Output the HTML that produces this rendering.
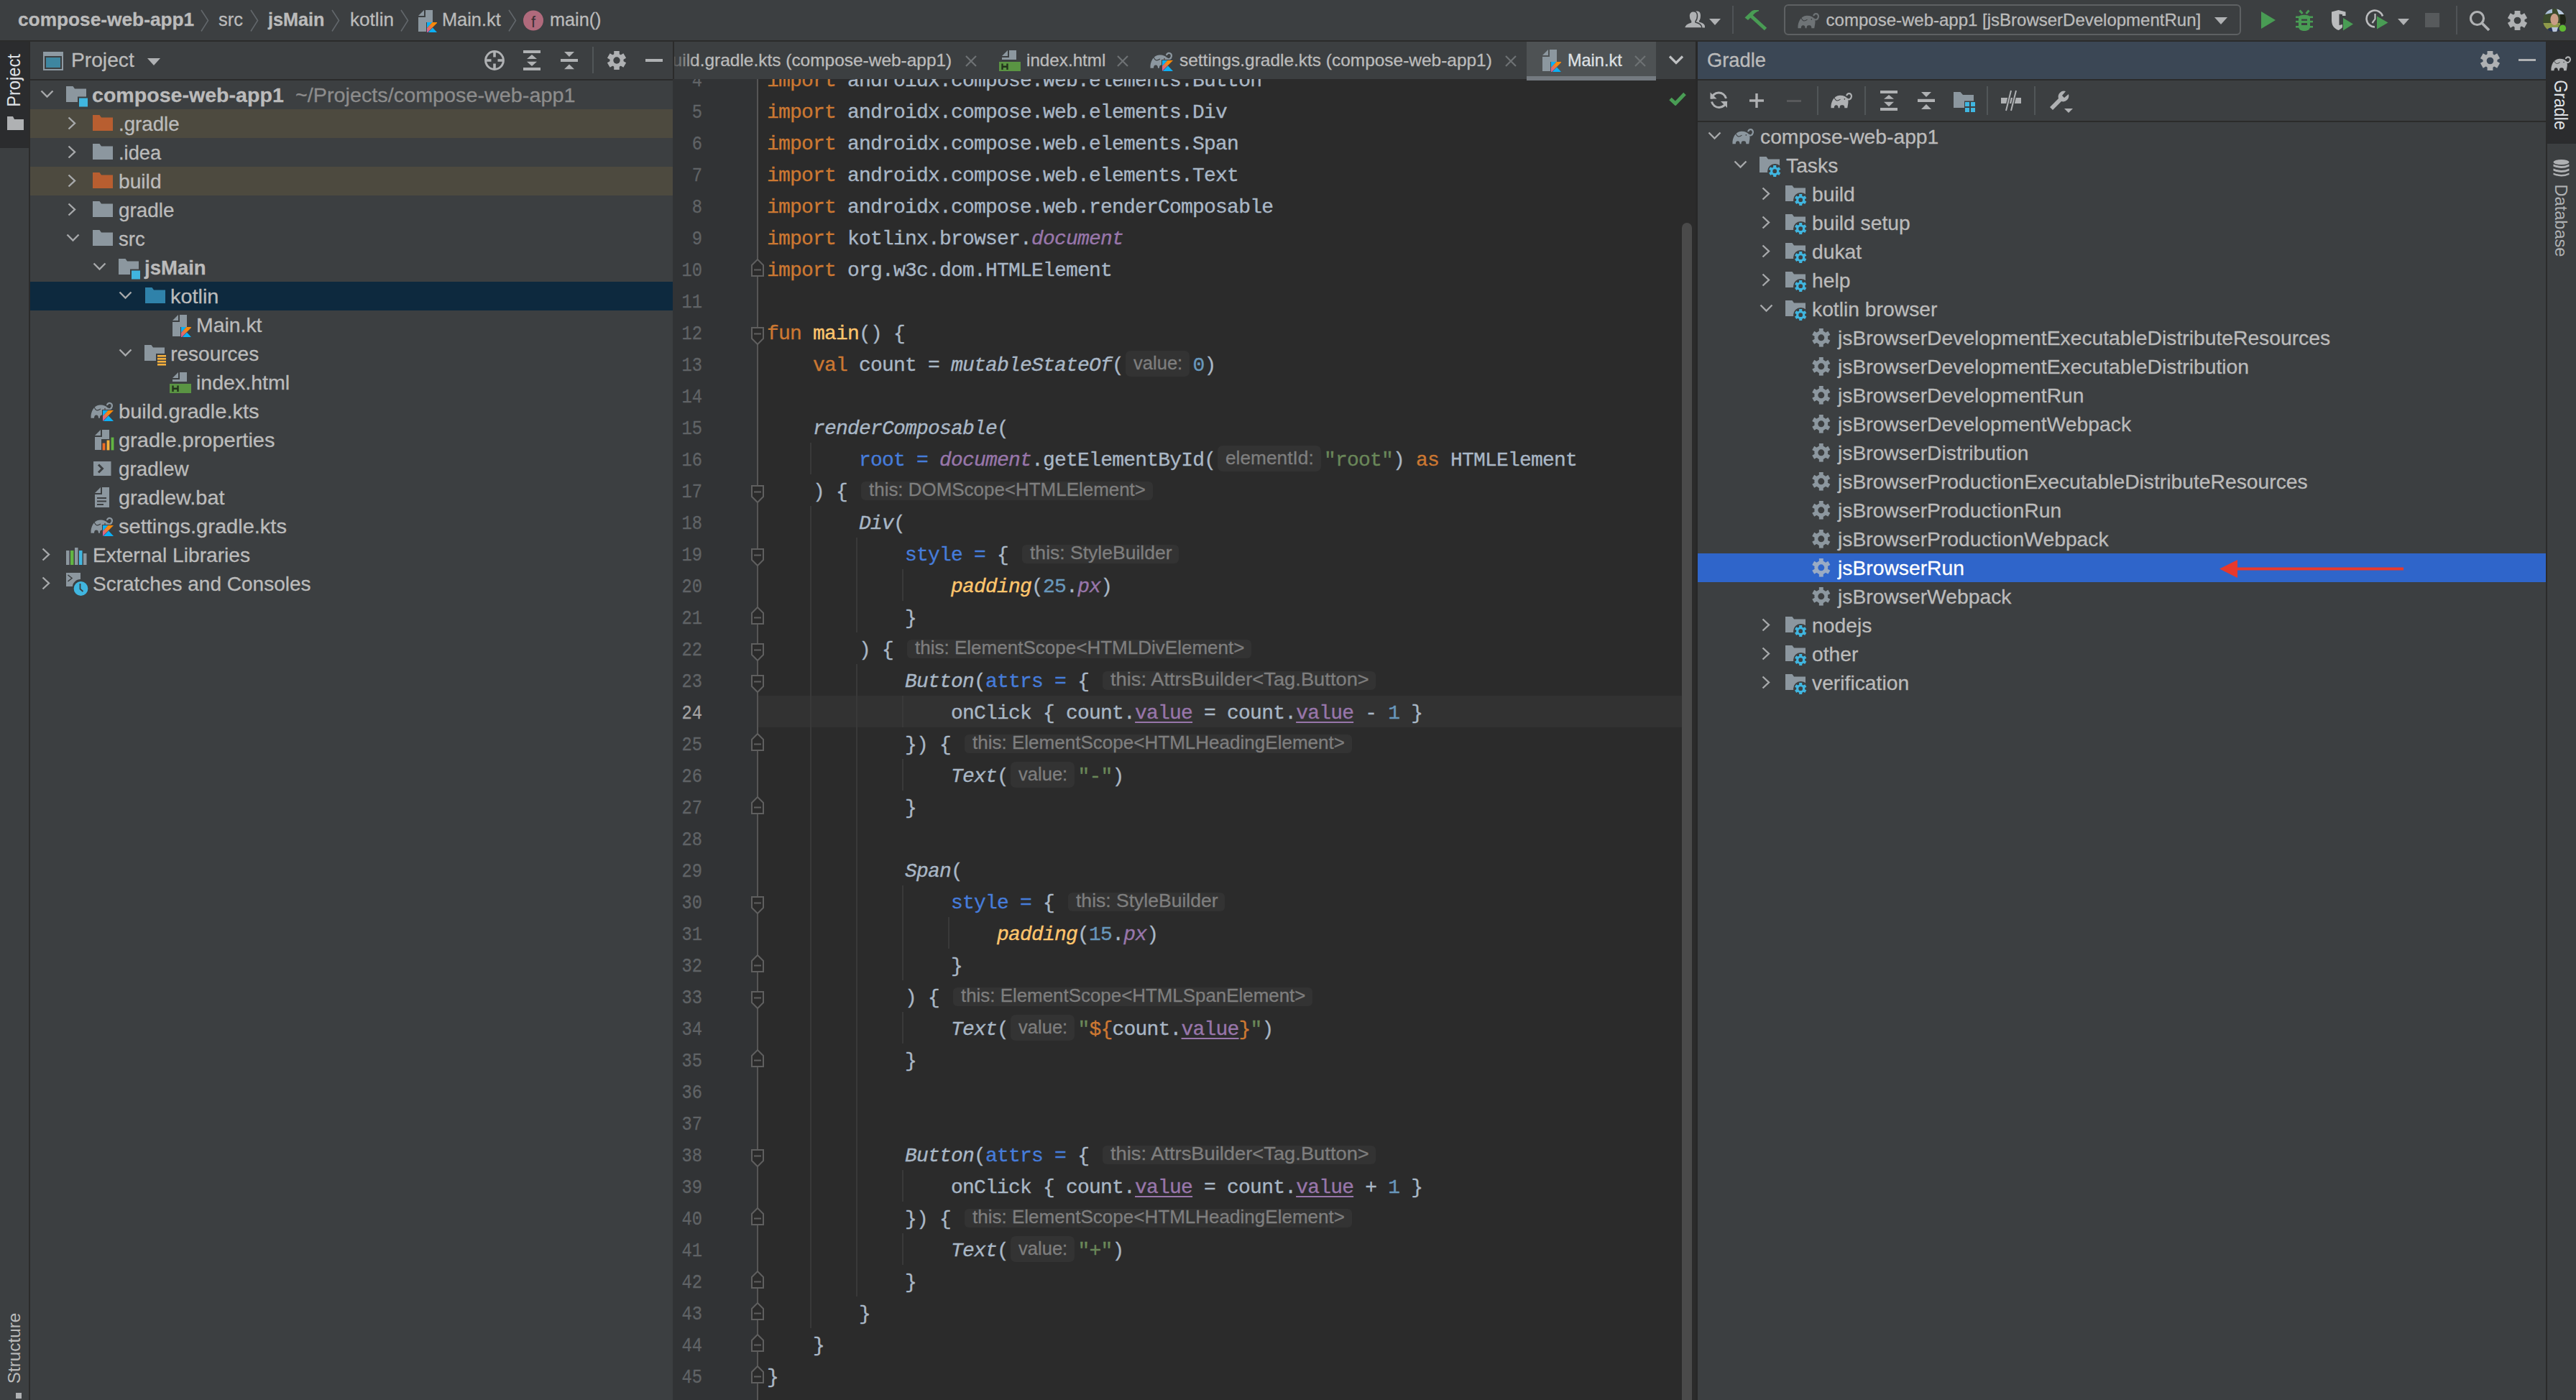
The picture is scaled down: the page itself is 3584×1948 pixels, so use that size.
<!DOCTYPE html><html><head><meta charset="utf-8"><style>
html,body{margin:0;padding:0;width:3584px;height:1948px;overflow:hidden;background:#3c3f41}
div{position:absolute;white-space:pre}
svg{position:absolute}
</style></head><body>
<div style="left:0px;top:0px;width:3584px;height:56px;background:#3c3f41;"></div>
<div style="left:0px;top:57px;width:3584px;height:1891px;background:#3c3f41;"></div>
<div style="left:0px;top:57px;width:40px;height:1891px;background:#3c3f41;"></div>
<div style="left:0px;top:57px;width:40px;height:149px;background:#2b2c2e;"></div>
<div style="left:40px;top:57px;width:2px;height:1891px;background:#2b2b2b;"></div>
<div style="left:42px;top:57px;width:894px;height:53px;background:#3c3f41;"></div>
<div style="left:42px;top:110px;width:894px;height:2px;background:#2b2b2b;"></div>
<div style="left:42px;top:112px;width:894px;height:1836px;background:#3c3f41;"></div>
<div style="left:936px;top:57px;width:2px;height:53px;background:#2b2b2b;"></div>
<div style="left:938px;top:57px;width:1421px;height:53px;background:#3c3f41;"></div>
<div style="left:936px;top:110px;width:118px;height:1838px;background:#313335;"></div>
<div style="left:1053px;top:110px;width:2px;height:1838px;background:#555555;"></div>
<div style="left:1055px;top:110px;width:1304px;height:1838px;background:#2b2b2b;"></div>
<div style="left:2359px;top:57px;width:3px;height:1891px;background:#282828;"></div>
<div style="left:2362px;top:57px;width:1180px;height:53px;background:#3b4755;"></div>
<div style="left:2362px;top:110px;width:1180px;height:2px;background:#2b2b2b;"></div>
<div style="left:2362px;top:112px;width:1180px;height:56px;background:#3c3f41;"></div>
<div style="left:2362px;top:168px;width:1180px;height:2px;background:#2b2b2b;"></div>
<div style="left:2362px;top:170px;width:1180px;height:1778px;background:#3c3f41;"></div>
<div style="left:3542px;top:57px;width:2px;height:1891px;background:#2b2b2b;"></div>
<div style="left:3544px;top:57px;width:40px;height:1891px;background:#3c3f41;"></div>
<div style="left:3544px;top:57px;width:40px;height:143px;background:#2b2c2e;"></div>
<div style="left:24.5px;top:14.0px;font:700 26px/26px 'Liberation Sans',sans-serif;color:#bbbbbb;-webkit-text-stroke:0.3px #bbbbbb;transform:scaleX(1.0103);transform-origin:0 0;">compose-web-app1</div>
<svg style="position:absolute;left:279px;top:13px" width="12" height="32" viewBox="0 0 12 32"><polyline points="1,1 10.5,15.5 1,30.5" fill="none" stroke="#62676b" stroke-width="1.6"/></svg>
<div style="left:304.3px;top:14.0px;font:400 26px/26px 'Liberation Sans',sans-serif;color:#bbbbbb;-webkit-text-stroke:0.3px #bbbbbb;transform:scaleX(0.9771);transform-origin:0 0;">src</div>
<svg style="position:absolute;left:348px;top:13px" width="12" height="32" viewBox="0 0 12 32"><polyline points="1,1 10.5,15.5 1,30.5" fill="none" stroke="#62676b" stroke-width="1.6"/></svg>
<svg style="position:absolute;left:461px;top:13px" width="12" height="32" viewBox="0 0 12 32"><polyline points="1,1 10.5,15.5 1,30.5" fill="none" stroke="#62676b" stroke-width="1.6"/></svg>
<div style="left:372.6px;top:14.0px;font:700 26px/26px 'Liberation Sans',sans-serif;color:#bbbbbb;-webkit-text-stroke:0.3px #bbbbbb;transform:scaleX(0.9707);transform-origin:0 0;">jsMain</div>
<div style="left:487.0px;top:14.0px;font:400 26px/26px 'Liberation Sans',sans-serif;color:#bbbbbb;-webkit-text-stroke:0.3px #bbbbbb;transform:scaleX(1.0049);transform-origin:0 0;">kotlin</div>
<svg style="position:absolute;left:557px;top:13px" width="12" height="32" viewBox="0 0 12 32"><polyline points="1,1 10.5,15.5 1,30.5" fill="none" stroke="#62676b" stroke-width="1.6"/></svg>
<svg style="position:absolute;left:582px;top:14px" width="21" height="31" viewBox="0 0 21 31"><path d="M0 8 L8 0 V8 Z" fill="#8c979f"/><path d="M10 0 H20 V17 H11 V30 H0 V10 H10 Z" fill="#8c979f"/></svg>
<svg style="position:absolute;left:594px;top:31px" width="14" height="14" viewBox="0 0 14 14"><defs><linearGradient id="kg31" x1="1" y1="0" x2="0" y2="1"><stop offset="0.35" stop-color="#f88909"/><stop offset="1" stop-color="#c757bc"/></linearGradient></defs><path d="M0 0 H7.5 L0 8 Z" fill="#0bb0f5"/><path d="M7.5 0 H15 L0 15 V8 Z" fill="url(#kg31)"/><path d="M0.8 15 L8 7.5 L15 15 Z" fill="#0bb0f5"/></svg>
<div style="left:615.2px;top:14.0px;font:400 26px/26px 'Liberation Sans',sans-serif;color:#bbbbbb;-webkit-text-stroke:0.3px #bbbbbb;transform:scaleX(0.9753);transform-origin:0 0;">Main.kt</div>
<svg style="position:absolute;left:707px;top:13px" width="12" height="32" viewBox="0 0 12 32"><polyline points="1,1 10.5,15.5 1,30.5" fill="none" stroke="#62676b" stroke-width="1.6"/></svg>
<svg style="position:absolute;left:727px;top:14px" width="30" height="30" viewBox="0 0 30 30"><circle cx="15" cy="14.5" r="14" fill="#b06a7c"/><text x="15" y="24" text-anchor="middle" font-family="Liberation Sans" font-size="22" fill="#3a3034">f</text></svg>
<div style="left:764.7px;top:14.0px;font:400 26px/26px 'Liberation Sans',sans-serif;color:#bbbbbb;-webkit-text-stroke:0.3px #bbbbbb;transform:scaleX(0.9703);transform-origin:0 0;">main()</div>
<div style="left:42px;top:152px;width:894px;height:40px;background:#4d4a3f;"></div>
<div style="left:42px;top:232px;width:894px;height:40px;background:#4d4a3f;"></div>
<div style="left:42px;top:392px;width:894px;height:40px;background:#0d293e;"></div>
<svg style="position:absolute;left:55.5px;top:124.5px" width="20" height="13" viewBox="0 0 20 13"><polyline points="1.5,1.5 9.5,9.5 17.5,1.5" fill="none" stroke="#a7a9ab" stroke-width="2.4"/></svg>
<svg style="position:absolute;left:91.5px;top:120px" width="31" height="29" viewBox="0 0 31 29"><path d="M0 0 H9.5 L12 3.5 H28 V14.5 H16 V22 H0 Z" fill="#8c979f"/><rect x="18" y="16.5" width="12" height="12" fill="#40b6e0"/></svg>
<div style="left:128.4px;top:119.3px;font:700 28px/28px 'Liberation Sans',sans-serif;color:#bbbbbb;-webkit-text-stroke:0.3px #bbbbbb;transform:scaleX(1.0207);transform-origin:0 0;">compose-web-app1</div>
<svg style="position:absolute;left:94.0px;top:161.5px" width="13" height="20" viewBox="0 0 13 20"><polyline points="1.5,1.5 10,9.5 1.5,17.5" fill="none" stroke="#a7a9ab" stroke-width="2.4"/></svg>
<svg style="position:absolute;left:128.5px;top:160px" width="28" height="22" viewBox="0 0 28 22"><path d="M0 0 H9.5 L12 3.5 H28 V22 H0 Z" fill="#b85e30"/></svg>
<div style="left:165.0px;top:159.3px;font:400 28px/28px 'Liberation Sans',sans-serif;color:#bbbbbb;-webkit-text-stroke:0.3px #bbbbbb;transform:scaleX(0.9884);transform-origin:0 0;">.gradle</div>
<svg style="position:absolute;left:94.0px;top:201.5px" width="13" height="20" viewBox="0 0 13 20"><polyline points="1.5,1.5 10,9.5 1.5,17.5" fill="none" stroke="#a7a9ab" stroke-width="2.4"/></svg>
<svg style="position:absolute;left:128.5px;top:200px" width="28" height="22" viewBox="0 0 28 22"><path d="M0 0 H9.5 L12 3.5 H28 V22 H0 Z" fill="#8c979f"/></svg>
<div style="left:165.0px;top:199.3px;font:400 28px/28px 'Liberation Sans',sans-serif;color:#bbbbbb;-webkit-text-stroke:0.3px #bbbbbb;transform:scaleX(0.9738);transform-origin:0 0;">.idea</div>
<svg style="position:absolute;left:94.0px;top:241.5px" width="13" height="20" viewBox="0 0 13 20"><polyline points="1.5,1.5 10,9.5 1.5,17.5" fill="none" stroke="#a7a9ab" stroke-width="2.4"/></svg>
<svg style="position:absolute;left:128.5px;top:240px" width="28" height="22" viewBox="0 0 28 22"><path d="M0 0 H9.5 L12 3.5 H28 V22 H0 Z" fill="#b85e30"/></svg>
<div style="left:165.0px;top:239.3px;font:400 28px/28px 'Liberation Sans',sans-serif;color:#bbbbbb;-webkit-text-stroke:0.3px #bbbbbb;transform:scaleX(1.0068);transform-origin:0 0;">build</div>
<svg style="position:absolute;left:94.0px;top:281.5px" width="13" height="20" viewBox="0 0 13 20"><polyline points="1.5,1.5 10,9.5 1.5,17.5" fill="none" stroke="#a7a9ab" stroke-width="2.4"/></svg>
<svg style="position:absolute;left:128.5px;top:280px" width="28" height="22" viewBox="0 0 28 22"><path d="M0 0 H9.5 L12 3.5 H28 V22 H0 Z" fill="#8c979f"/></svg>
<div style="left:165.0px;top:279.3px;font:400 28px/28px 'Liberation Sans',sans-serif;color:#bbbbbb;-webkit-text-stroke:0.3px #bbbbbb;transform:scaleX(0.9962);transform-origin:0 0;">gradle</div>
<svg style="position:absolute;left:92.0px;top:324.5px" width="20" height="13" viewBox="0 0 20 13"><polyline points="1.5,1.5 9.5,9.5 17.5,1.5" fill="none" stroke="#a7a9ab" stroke-width="2.4"/></svg>
<svg style="position:absolute;left:128.5px;top:320px" width="28" height="22" viewBox="0 0 28 22"><path d="M0 0 H9.5 L12 3.5 H28 V22 H0 Z" fill="#8c979f"/></svg>
<div style="left:165.0px;top:319.3px;font:400 28px/28px 'Liberation Sans',sans-serif;color:#bbbbbb;-webkit-text-stroke:0.3px #bbbbbb;transform:scaleX(0.9838);transform-origin:0 0;">src</div>
<svg style="position:absolute;left:128.5px;top:364.5px" width="20" height="13" viewBox="0 0 20 13"><polyline points="1.5,1.5 9.5,9.5 17.5,1.5" fill="none" stroke="#a7a9ab" stroke-width="2.4"/></svg>
<svg style="position:absolute;left:164.5px;top:360px" width="31" height="29" viewBox="0 0 31 29"><path d="M0 0 H9.5 L12 3.5 H28 V14.5 H16 V22 H0 Z" fill="#8c979f"/><rect x="18" y="16.5" width="12" height="12" fill="#40b6e0"/></svg>
<div style="left:201.0px;top:359.3px;font:700 28px/28px 'Liberation Sans',sans-serif;color:#bbbbbb;-webkit-text-stroke:0.3px #bbbbbb;transform:scaleX(0.9830);transform-origin:0 0;">jsMain</div>
<svg style="position:absolute;left:165.0px;top:404.5px" width="20" height="13" viewBox="0 0 20 13"><polyline points="1.5,1.5 9.5,9.5 17.5,1.5" fill="none" stroke="#a7a9ab" stroke-width="2.4"/></svg>
<svg style="position:absolute;left:201.5px;top:400px" width="28" height="22" viewBox="0 0 28 22"><path d="M0 0 H9.5 L12 3.5 H28 V22 H0 Z" fill="#2f82aa"/></svg>
<div style="left:237.2px;top:399.3px;font:400 28px/28px 'Liberation Sans',sans-serif;color:#bbbbbb;-webkit-text-stroke:0.3px #bbbbbb;transform:scaleX(1.0308);transform-origin:0 0;">kotlin</div>
<svg style="position:absolute;left:240.0px;top:438px" width="21" height="31" viewBox="0 0 21 31"><path d="M0 8 L8 0 V8 Z" fill="#8c979f"/><path d="M10 0 H20 V17 H11 V30 H0 V10 H10 Z" fill="#8c979f"/></svg>
<svg style="position:absolute;left:252.0px;top:455px" width="14" height="14" viewBox="0 0 14 14"><defs><linearGradient id="kg64" x1="1" y1="0" x2="0" y2="1"><stop offset="0.35" stop-color="#f88909"/><stop offset="1" stop-color="#c757bc"/></linearGradient></defs><path d="M0 0 H7.5 L0 8 Z" fill="#0bb0f5"/><path d="M7.5 0 H15 L0 15 V8 Z" fill="url(#kg64)"/><path d="M0.8 15 L8 7.5 L15 15 Z" fill="#0bb0f5"/></svg>
<div style="left:272.7px;top:439.3px;font:400 28px/28px 'Liberation Sans',sans-serif;color:#bbbbbb;-webkit-text-stroke:0.3px #bbbbbb;transform:scaleX(1.0133);transform-origin:0 0;">Main.kt</div>
<svg style="position:absolute;left:165.0px;top:484.5px" width="20" height="13" viewBox="0 0 20 13"><polyline points="1.5,1.5 9.5,9.5 17.5,1.5" fill="none" stroke="#a7a9ab" stroke-width="2.4"/></svg>
<svg style="position:absolute;left:201.0px;top:480px" width="31" height="29" viewBox="0 0 31 29"><path d="M0 0 H9.5 L12 3.5 H28 V12 H16 V22 H0 Z" fill="#8c979f"/><rect x="18" y="14" width="12" height="2.6" fill="#f4af3d"/><rect x="18" y="18" width="12" height="2.6" fill="#f4af3d"/><rect x="18" y="22" width="12" height="2.6" fill="#f4af3d"/><rect x="18" y="26" width="12" height="2.6" fill="#f4af3d"/></svg>
<div style="left:237.2px;top:479.3px;font:400 28px/28px 'Liberation Sans',sans-serif;color:#bbbbbb;-webkit-text-stroke:0.3px #bbbbbb;">resources</div>
<svg style="position:absolute;left:235.5px;top:518px" width="31" height="29" viewBox="0 0 31 29"><path d="M4 8 L12 0 V8 Z" fill="#8c979f"/><path d="M14 0 H24 V13 H4 V10 H14 Z" fill="#8c979f"/><rect x="0" y="16" width="30" height="13" fill="#5a9443"/><path d="M4.5 18.5 V27 M11.5 18.5 V27 M4.5 22.7 H11.5" stroke="#22331c" stroke-width="2.4"/></svg>
<div style="left:272.7px;top:519.3px;font:400 28px/28px 'Liberation Sans',sans-serif;color:#bbbbbb;-webkit-text-stroke:0.3px #bbbbbb;transform:scaleX(1.0195);transform-origin:0 0;">index.html</div>
<svg style="position:absolute;left:125.5px;top:559px" width="31" height="24" viewBox="0 0 31 22"><path d="M0.5 21.7 C0 13 4.5 4 13 3.6 C18 3.4 22.5 5 24.5 8.5 C25.5 10.5 25.5 13 25 16 L24 21.7 H20 C20 19 19.5 17.5 16.5 17.5 C13.5 17.5 13 19 13 21.7 H11 C11 19 10 17.5 8 17.5 C6 17.5 5 19 5 21.7 Z" fill="#8c979f"/><path d="M23.5 8 C25.5 10.5 29 9.5 29.8 5.5 C30.3 2.5 28.5 0.6 26 0.9 C24.2 1.1 23 2.4 23.3 4" fill="none" stroke="#8c979f" stroke-width="2.3"/><path d="M5 6.5 C7 11 9 12.5 14 9" fill="none" stroke="#3c3f41" stroke-width="1.1"/><circle cx="20" cy="8.8" r="0.9" fill="#3c3f41"/></svg>
<div style="left:141.5px;top:570px;width:16px;height:17px;background:#3c3f41"></div>
<svg style="position:absolute;left:142.5px;top:571px" width="15" height="15" viewBox="0 0 15 15"><defs><linearGradient id="kg73" x1="1" y1="0" x2="0" y2="1"><stop offset="0.35" stop-color="#f88909"/><stop offset="1" stop-color="#c757bc"/></linearGradient></defs><path d="M0 0 H7.5 L0 8 Z" fill="#0bb0f5"/><path d="M7.5 0 H15 L0 15 V8 Z" fill="url(#kg73)"/><path d="M0.8 15 L8 7.5 L15 15 Z" fill="#0bb0f5"/></svg>
<div style="left:164.8px;top:559.3px;font:400 28px/28px 'Liberation Sans',sans-serif;color:#bbbbbb;-webkit-text-stroke:0.3px #bbbbbb;transform:scaleX(1.0388);transform-origin:0 0;">build.gradle.kts</div>
<svg style="position:absolute;left:132.0px;top:598px" width="28" height="31" viewBox="0 0 28 31"><path d="M0 8 L8 0 V8 Z" fill="#8c979f"/><path d="M10 0 H20 V13 H9 V28 H0 V10 H10 Z" fill="#8c979f"/><rect x="10" y="18" width="5" height="11" fill="#ef6c23" stroke="#3c3f41" stroke-width="1.2"/><rect x="16" y="14" width="5" height="15" fill="#f4b13d" stroke="#3c3f41" stroke-width="1.2"/><rect x="22" y="10" width="5" height="19" fill="#62b543" stroke="#3c3f41" stroke-width="1.2"/></svg>
<div style="left:164.8px;top:599.3px;font:400 28px/28px 'Liberation Sans',sans-serif;color:#bbbbbb;-webkit-text-stroke:0.3px #bbbbbb;transform:scaleX(1.0348);transform-origin:0 0;">gradle.properties</div>
<svg style="position:absolute;left:130.0px;top:642px" width="25" height="21" viewBox="0 0 25 21"><rect x="0" y="0" width="24.5" height="20" fill="#8c979f"/><polyline points="7,4.5 12.5,10 7,15.5" fill="none" stroke="#3c3f41" stroke-width="3"/></svg>
<div style="left:164.8px;top:639.3px;font:400 28px/28px 'Liberation Sans',sans-serif;color:#bbbbbb;-webkit-text-stroke:0.3px #bbbbbb;transform:scaleX(0.9949);transform-origin:0 0;">gradlew</div>
<svg style="position:absolute;left:132.0px;top:678px" width="21" height="29" viewBox="0 0 21 29"><path d="M0 8 L8 0 V8 Z" fill="#8c979f"/><path d="M10 0 H20 V28 H0 V10 H10 Z" fill="#8c979f"/><rect x="3" y="14" width="13" height="2" fill="#3c3f41"/><rect x="3" y="18.5" width="13" height="2" fill="#3c3f41"/><rect x="3" y="23" width="9" height="2" fill="#3c3f41"/></svg>
<div style="left:164.8px;top:679.3px;font:400 28px/28px 'Liberation Sans',sans-serif;color:#bbbbbb;-webkit-text-stroke:0.3px #bbbbbb;transform:scaleX(1.0294);transform-origin:0 0;">gradlew.bat</div>
<svg style="position:absolute;left:125.5px;top:719px" width="31" height="24" viewBox="0 0 31 22"><path d="M0.5 21.7 C0 13 4.5 4 13 3.6 C18 3.4 22.5 5 24.5 8.5 C25.5 10.5 25.5 13 25 16 L24 21.7 H20 C20 19 19.5 17.5 16.5 17.5 C13.5 17.5 13 19 13 21.7 H11 C11 19 10 17.5 8 17.5 C6 17.5 5 19 5 21.7 Z" fill="#8c979f"/><path d="M23.5 8 C25.5 10.5 29 9.5 29.8 5.5 C30.3 2.5 28.5 0.6 26 0.9 C24.2 1.1 23 2.4 23.3 4" fill="none" stroke="#8c979f" stroke-width="2.3"/><path d="M5 6.5 C7 11 9 12.5 14 9" fill="none" stroke="#3c3f41" stroke-width="1.1"/><circle cx="20" cy="8.8" r="0.9" fill="#3c3f41"/></svg>
<div style="left:141.5px;top:730px;width:16px;height:17px;background:#3c3f41"></div>
<svg style="position:absolute;left:142.5px;top:731px" width="15" height="15" viewBox="0 0 15 15"><defs><linearGradient id="kg83" x1="1" y1="0" x2="0" y2="1"><stop offset="0.35" stop-color="#f88909"/><stop offset="1" stop-color="#c757bc"/></linearGradient></defs><path d="M0 0 H7.5 L0 8 Z" fill="#0bb0f5"/><path d="M7.5 0 H15 L0 15 V8 Z" fill="url(#kg83)"/><path d="M0.8 15 L8 7.5 L15 15 Z" fill="#0bb0f5"/></svg>
<div style="left:164.8px;top:719.3px;font:400 28px/28px 'Liberation Sans',sans-serif;color:#bbbbbb;-webkit-text-stroke:0.3px #bbbbbb;transform:scaleX(1.0367);transform-origin:0 0;">settings.gradle.kts</div>
<svg style="position:absolute;left:57.5px;top:761.5px" width="13" height="20" viewBox="0 0 13 20"><polyline points="1.5,1.5 10,9.5 1.5,17.5" fill="none" stroke="#a7a9ab" stroke-width="2.4"/></svg>
<svg style="position:absolute;left:92.0px;top:761px" width="30" height="26" viewBox="0 0 30 26"><rect x="0" y="5" width="4.5" height="20" fill="#8c979f"/><rect x="6" y="5" width="4.5" height="20" fill="#62b543"/><rect x="12" y="1" width="4.5" height="24" fill="#8c979f"/><rect x="18" y="5" width="4.5" height="20" fill="#40b6e0"/><rect x="24" y="9" width="4.5" height="16" fill="#8c979f"/></svg>
<div style="left:129.0px;top:759.3px;font:400 28px/28px 'Liberation Sans',sans-serif;color:#bbbbbb;-webkit-text-stroke:0.3px #bbbbbb;transform:scaleX(1.0055);transform-origin:0 0;">External Libraries</div>
<svg style="position:absolute;left:57.5px;top:801.5px" width="13" height="20" viewBox="0 0 13 20"><polyline points="1.5,1.5 10,9.5 1.5,17.5" fill="none" stroke="#a7a9ab" stroke-width="2.4"/></svg>
<svg style="position:absolute;left:92.0px;top:797px" width="31" height="33" viewBox="0 0 31 33"><path d="M0 0 H20 V9 C14 9 9 14 9 19 H0 Z" fill="#8c979f"/><polyline points="2.5,3 8,7.5 2.5,12" fill="none" stroke="#3c3f41" stroke-width="1.6"/><circle cx="20.5" cy="22" r="10.5" fill="#40b6e0" stroke="#3c3f41" stroke-width="1.2"/><polyline points="19.5,15 19.5,22.5 23.5,26" fill="none" stroke="#3c3f41" stroke-width="1.8"/></svg>
<div style="left:129.0px;top:799.3px;font:400 28px/28px 'Liberation Sans',sans-serif;color:#bbbbbb;-webkit-text-stroke:0.3px #bbbbbb;">Scratches and Consoles</div>
<div style="left:410.5px;top:119.3px;font:400 28px/28px 'Liberation Sans',sans-serif;color:#8c8c8c;-webkit-text-stroke:0.3px #8c8c8c;transform:scaleX(1.0277);transform-origin:0 0;">~/Projects/compose-web-app1</div>
<div style="left:19px;top:111.5px;width:0;height:0;"><div style="left:0;top:0;transform:translate(-50%,-50%) rotate(-90deg) scaleX(0.9085);font:400 26px/26px 'Liberation Sans',sans-serif;color:#dfe1e5">Project</div></div>
<svg style="position:absolute;left:10px;top:162px" width="23" height="19" viewBox="0 0 23 19"><path d="M0 0 H8 L10 4 H23 V19 H0 Z" fill="#afb1b3"/></svg>
<div style="left:20px;top:1876px;width:0;height:0;"><div style="left:0;top:0;transform:translate(-50%,-50%) rotate(-90deg) scaleX(1.0103);font:400 24px/24px 'Liberation Sans',sans-serif;color:#bbbbbb">Structure</div></div>
<div style="left:22px;top:1938px;width:8px;height:8px;background:#afb1b3;"></div>
<svg style="position:absolute;left:3549px;top:78px" width="28" height="21" viewBox="0 0 31 22"><path d="M0.5 21.7 C0 13 4.5 4 13 3.6 C18 3.4 22.5 5 24.5 8.5 C25.5 10.5 25.5 13 25 16 L24 21.7 H20 C20 19 19.5 17.5 16.5 17.5 C13.5 17.5 13 19 13 21.7 H11 C11 19 10 17.5 8 17.5 C6 17.5 5 19 5 21.7 Z" fill="#afb1b3"/><path d="M23.5 8 C25.5 10.5 29 9.5 29.8 5.5 C30.3 2.5 28.5 0.6 26 0.9 C24.2 1.1 23 2.4 23.3 4" fill="none" stroke="#afb1b3" stroke-width="2.3"/><path d="M5 6.5 C7 11 9 12.5 14 9" fill="none" stroke="#3c3f41" stroke-width="1.1"/><circle cx="20" cy="8.8" r="0.9" fill="#3c3f41"/></svg>
<div style="left:3563px;top:145.5px;width:0;height:0;"><div style="left:0;top:0;transform:translate(-50%,-50%) rotate(90deg) scaleX(0.8910);font:400 26px/26px 'Liberation Sans',sans-serif;color:#dfe1e5">Gradle</div></div>
<svg style="position:absolute;left:3552px;top:222px" width="23" height="26" viewBox="0 0 23 26"><ellipse cx="11.5" cy="3.6" rx="11" ry="3.6" fill="#afb1b3"/><path d="M0.5 6.5 Q11.5 11.5 22.5 6.5 V9.5 Q11.5 14.5 0.5 9.5Z" fill="#afb1b3"/><path d="M0.5 12.5 Q11.5 17.5 22.5 12.5 V15.5 Q11.5 20.5 0.5 15.5Z" fill="#afb1b3"/><path d="M0.5 18.5 Q11.5 23.5 22.5 18.5 V21 Q11.5 26 0.5 21Z" fill="#afb1b3"/></svg>
<div style="left:3563px;top:306.5px;width:0;height:0;"><div style="left:0;top:0;transform:translate(-50%,-50%) rotate(90deg) scaleX(0.9806);font:400 24px/24px 'Liberation Sans',sans-serif;color:#afb1b3">Database</div></div>
<svg style="position:absolute;left:60px;top:72px" width="28" height="26" viewBox="0 0 28 26"><rect x="0" y="0" width="28" height="26" fill="#8e9aa3"/><rect x="2" y="6" width="24" height="18" fill="#3c3f41"/><rect x="4" y="8" width="20" height="14" fill="#3e86a0"/></svg>
<div style="left:99.4px;top:69.8px;font:400 28px/28px 'Liberation Sans',sans-serif;color:#bbbbbb;-webkit-text-stroke:0.3px #bbbbbb;transform:scaleX(1.0069);transform-origin:0 0;">Project</div>
<svg style="position:absolute;left:205px;top:81px" width="18" height="11" viewBox="0 0 18 11"><path d="M0 0 H18 L9 10 Z" fill="#afb1b3"/></svg>
<svg style="position:absolute;left:673px;top:69px" width="30" height="30" viewBox="0 0 30 30"><circle cx="15" cy="15" r="12.4" fill="none" stroke="#afb1b3" stroke-width="3"/><rect x="13.2" y="3" width="3.6" height="7.5" fill="#afb1b3"/><rect x="13.2" y="19.5" width="3.6" height="7.5" fill="#afb1b3"/><rect x="3" y="13.2" width="7.5" height="3.6" fill="#afb1b3"/><rect x="19.5" y="13.2" width="7.5" height="3.6" fill="#afb1b3"/></svg>
<svg style="position:absolute;left:728px;top:70px" width="24" height="28" viewBox="0 0 24 28"><rect x="0" y="0" width="24" height="4" fill="#afb1b3"/><rect x="0" y="24" width="24" height="4" fill="#afb1b3"/><path d="M12 6 L19 12 H5 Z" fill="#afb1b3"/><path d="M5 15.8 H19 L12 22 Z" fill="#afb1b3"/></svg>
<svg style="position:absolute;left:780px;top:71px" width="24" height="26" viewBox="0 0 24 26"><path d="M5 1 H19 L12 8 Z" fill="#afb1b3"/><rect x="0" y="11" width="24" height="4" fill="#afb1b3"/><path d="M12 18.4 L19 25.2 H5 Z" fill="#afb1b3"/></svg>
<div style="left:824px;top:65px;width:2px;height:37px;background:#515658;"></div>
<svg style="position:absolute;left:845px;top:70.5px" width="26" height="26" viewBox="0 0 26 26"><circle cx="13.0" cy="13.0" r="9.62" fill="#afb1b3"/><rect x="9.23" y="0" width="7.54" height="26" fill="#afb1b3" transform="rotate(0 13.0 13.0)"/><rect x="9.23" y="0" width="7.54" height="26" fill="#afb1b3" transform="rotate(60 13.0 13.0)"/><rect x="9.23" y="0" width="7.54" height="26" fill="#afb1b3" transform="rotate(120 13.0 13.0)"/><circle cx="13.0" cy="13.0" r="4.68" fill="#3c3f41"/></svg>
<div style="left:898px;top:82px;width:24px;height:4px;background:#afb1b3;"></div>
<div style="left:938px;top:57px;width:1400px;height:53px;overflow:hidden">
<div style="left:-15.6px;top:15.2px;font:400 24px/24px 'Liberation Sans',sans-serif;color:#bbbbbb;-webkit-text-stroke:0.3px #bbbbbb;transform:scaleX(1.0187);transform-origin:0 0;">build.gradle.kts (compose-web-app1)</div>
</div>
<div style="left:938px;top:57px;width:30px;height:53px;background:linear-gradient(to right,rgba(60,63,65,0.8),rgba(60,63,65,0))"></div>
<svg style="position:absolute;left:1343px;top:77px" width="16" height="16" viewBox="0 0 16 16"><path d="M1 1 L15 15 M15 1 L1 15" stroke="#6e7274" stroke-width="2.2"/></svg>
<svg style="position:absolute;left:1390px;top:70px" width="31" height="29" viewBox="0 0 31 29"><path d="M4 8 L12 0 V8 Z" fill="#8c979f"/><path d="M14 0 H24 V13 H4 V10 H14 Z" fill="#8c979f"/><rect x="0" y="16" width="30" height="13" fill="#5a9443"/><path d="M4.5 18.5 V27 M11.5 18.5 V27 M4.5 22.7 H11.5" stroke="#22331c" stroke-width="2.4"/></svg>
<div style="left:1428.0px;top:72.2px;font:400 24px/24px 'Liberation Sans',sans-serif;color:#bbbbbb;-webkit-text-stroke:0.3px #bbbbbb;transform:scaleX(1.0092);transform-origin:0 0;">index.html</div>
<svg style="position:absolute;left:1554px;top:77px" width="16" height="16" viewBox="0 0 16 16"><path d="M1 1 L15 15 M15 1 L1 15" stroke="#6e7274" stroke-width="2.2"/></svg>
<svg style="position:absolute;left:1600px;top:72px" width="31" height="24" viewBox="0 0 31 22"><path d="M0.5 21.7 C0 13 4.5 4 13 3.6 C18 3.4 22.5 5 24.5 8.5 C25.5 10.5 25.5 13 25 16 L24 21.7 H20 C20 19 19.5 17.5 16.5 17.5 C13.5 17.5 13 19 13 21.7 H11 C11 19 10 17.5 8 17.5 C6 17.5 5 19 5 21.7 Z" fill="#8c979f"/><path d="M23.5 8 C25.5 10.5 29 9.5 29.8 5.5 C30.3 2.5 28.5 0.6 26 0.9 C24.2 1.1 23 2.4 23.3 4" fill="none" stroke="#8c979f" stroke-width="2.3"/><path d="M5 6.5 C7 11 9 12.5 14 9" fill="none" stroke="#3c3f41" stroke-width="1.1"/><circle cx="20" cy="8.8" r="0.9" fill="#3c3f41"/></svg>
<div style="left:1616px;top:83px;width:16px;height:17px;background:#3c3f41"></div>
<svg style="position:absolute;left:1617px;top:84px" width="15" height="15" viewBox="0 0 15 15"><defs><linearGradient id="kg119" x1="1" y1="0" x2="0" y2="1"><stop offset="0.35" stop-color="#f88909"/><stop offset="1" stop-color="#c757bc"/></linearGradient></defs><path d="M0 0 H7.5 L0 8 Z" fill="#0bb0f5"/><path d="M7.5 0 H15 L0 15 V8 Z" fill="url(#kg119)"/><path d="M0.8 15 L8 7.5 L15 15 Z" fill="#0bb0f5"/></svg>
<div style="left:1640.5px;top:72.2px;font:400 24px/24px 'Liberation Sans',sans-serif;color:#bbbbbb;-webkit-text-stroke:0.3px #bbbbbb;transform:scaleX(1.0187);transform-origin:0 0;">settings.gradle.kts (compose-web-app1)</div>
<svg style="position:absolute;left:2094px;top:77px" width="16" height="16" viewBox="0 0 16 16"><path d="M1 1 L15 15 M15 1 L1 15" stroke="#6e7274" stroke-width="2.2"/></svg>
<div style="left:2124px;top:57px;width:180px;height:53px;background:#4e5254;"></div>
<div style="left:2124px;top:106px;width:180px;height:5.5px;background:#747a80;"></div>
<svg style="position:absolute;left:2146px;top:69px" width="21" height="31" viewBox="0 0 21 31"><path d="M0 8 L8 0 V8 Z" fill="#8c979f"/><path d="M10 0 H20 V17 H11 V30 H0 V10 H10 Z" fill="#8c979f"/></svg>
<svg style="position:absolute;left:2158px;top:86px" width="14" height="14" viewBox="0 0 14 14"><defs><linearGradient id="kg125" x1="1" y1="0" x2="0" y2="1"><stop offset="0.35" stop-color="#f88909"/><stop offset="1" stop-color="#c757bc"/></linearGradient></defs><path d="M0 0 H7.5 L0 8 Z" fill="#0bb0f5"/><path d="M7.5 0 H15 L0 15 V8 Z" fill="url(#kg125)"/><path d="M0.8 15 L8 7.5 L15 15 Z" fill="#0bb0f5"/></svg>
<div style="left:2180.7px;top:72.2px;font:400 24px/24px 'Liberation Sans',sans-serif;color:#dfe1e5;-webkit-text-stroke:0.3px #dfe1e5;transform:scaleX(0.9782);transform-origin:0 0;">Main.kt</div>
<svg style="position:absolute;left:2274px;top:77px" width="16" height="16" viewBox="0 0 16 16"><path d="M1 1 L15 15 M15 1 L1 15" stroke="#6e7274" stroke-width="2.2"/></svg>
<svg style="position:absolute;left:2321px;top:76px" width="22" height="15" viewBox="0 0 22 15"><polyline points="2,2.5 11,11.5 20,2.5" fill="none" stroke="#bfc1c3" stroke-width="3.2"/></svg>
<svg style="position:absolute;left:2322px;top:128px" width="24" height="19" viewBox="0 0 24 19"><polyline points="2,9.5 9,16 22,2.5" fill="none" stroke="#499c54" stroke-width="5"/></svg>
<div style="left:2340px;top:310px;width:14px;height:1700px;background:#4a4a4a;border-radius:7px"></div>
<div style="left:1055px;top:968.4px;width:1285px;height:44px;background:#323232;"></div>
<div style="left:1127.0px;top:616.4px;width:2px;height:44px;background:#393939;"></div>
<div style="left:1127.0px;top:704.4px;width:2px;height:1144px;background:#393939;"></div>
<div style="left:1191.0px;top:748.4px;width:2px;height:132px;background:#393939;"></div>
<div style="left:1191.0px;top:924.4px;width:2px;height:880px;background:#393939;"></div>
<div style="left:1255.0px;top:792.4px;width:2px;height:44px;background:#393939;"></div>
<div style="left:1255.0px;top:968.4px;width:2px;height:44px;background:#393939;"></div>
<div style="left:1255.0px;top:1056.4px;width:2px;height:44px;background:#393939;"></div>
<div style="left:1255.0px;top:1232.4px;width:2px;height:132px;background:#393939;"></div>
<div style="left:1255.0px;top:1408.4px;width:2px;height:44px;background:#393939;"></div>
<div style="left:1255.0px;top:1628.4px;width:2px;height:44px;background:#393939;"></div>
<div style="left:1255.0px;top:1716.4px;width:2px;height:44px;background:#393939;"></div>
<div style="left:1319.0px;top:1276.4px;width:2px;height:44px;background:#393939;"></div>
<div style="left:938px;top:110px;width:1421px;height:1838px;overflow:hidden">
<div style="left:129.0px;top:-11.1px;font:400 28px/28px 'Liberation Mono',monospace;letter-spacing:-0.8px;-webkit-text-stroke:0.35px currentColor"><span style="color:#cc7832">import</span><span style="color:#a9b7c6"> androidx.compose.web.elements.Button</span></div>
<div style="left:129.0px;top:32.9px;font:400 28px/28px 'Liberation Mono',monospace;letter-spacing:-0.8px;-webkit-text-stroke:0.35px currentColor"><span style="color:#cc7832">import</span><span style="color:#a9b7c6"> androidx.compose.web.elements.Div</span></div>
<div style="left:129.0px;top:76.9px;font:400 28px/28px 'Liberation Mono',monospace;letter-spacing:-0.8px;-webkit-text-stroke:0.35px currentColor"><span style="color:#cc7832">import</span><span style="color:#a9b7c6"> androidx.compose.web.elements.Span</span></div>
<div style="left:129.0px;top:120.9px;font:400 28px/28px 'Liberation Mono',monospace;letter-spacing:-0.8px;-webkit-text-stroke:0.35px currentColor"><span style="color:#cc7832">import</span><span style="color:#a9b7c6"> androidx.compose.web.elements.Text</span></div>
<div style="left:129.0px;top:164.9px;font:400 28px/28px 'Liberation Mono',monospace;letter-spacing:-0.8px;-webkit-text-stroke:0.35px currentColor"><span style="color:#cc7832">import</span><span style="color:#a9b7c6"> androidx.compose.web.renderComposable</span></div>
<div style="left:129.0px;top:208.9px;font:400 28px/28px 'Liberation Mono',monospace;letter-spacing:-0.8px;-webkit-text-stroke:0.35px currentColor"><span style="color:#cc7832">import</span><span style="color:#a9b7c6"> kotlinx.browser.</span><span style="color:#9876aa;font-style:italic">document</span></div>
<div style="left:129.0px;top:252.9px;font:400 28px/28px 'Liberation Mono',monospace;letter-spacing:-0.8px;-webkit-text-stroke:0.35px currentColor"><span style="color:#cc7832">import</span><span style="color:#a9b7c6"> org.w3c.dom.HTMLElement</span></div>
<div style="left:129.0px;top:340.9px;font:400 28px/28px 'Liberation Mono',monospace;letter-spacing:-0.8px;-webkit-text-stroke:0.35px currentColor"><span style="color:#cc7832">fun</span><span style="color:#a9b7c6"> </span><span style="color:#ffc66d">main</span><span style="color:#a9b7c6">() {</span></div>
<div style="left:129.0px;top:384.9px;font:400 28px/28px 'Liberation Mono',monospace;letter-spacing:-0.8px;-webkit-text-stroke:0.35px currentColor"><span style="color:#a9b7c6">    </span><span style="color:#cc7832">val</span><span style="color:#a9b7c6"> count = </span><span style="color:#a9b7c6;font-style:italic">mutableStateOf</span><span style="color:#a9b7c6">(</span></div>
<div style="left:627.5px;top:377.9px;width:89.5px;height:36px;background:#333333;border-radius:7px"></div>
<div style="left:638.5px;top:382.8px;font:400 25px/25px 'Liberation Sans',sans-serif;color:#7e7e7e;-webkit-text-stroke:0.3px #7e7e7e;transform:scaleX(1.0224);transform-origin:0 0;">value:</div>
<div style="left:721.5px;top:384.9px;font:400 28px/28px 'Liberation Mono',monospace;letter-spacing:-0.8px;-webkit-text-stroke:0.35px currentColor"><span style="color:#6897bb">0</span><span style="color:#a9b7c6">)</span></div>
<div style="left:129.0px;top:472.9px;font:400 28px/28px 'Liberation Mono',monospace;letter-spacing:-0.8px;-webkit-text-stroke:0.35px currentColor"><span style="color:#a9b7c6">    </span><span style="color:#a9b7c6;font-style:italic">renderComposable</span><span style="color:#a9b7c6">(</span></div>
<div style="left:129.0px;top:516.9px;font:400 28px/28px 'Liberation Mono',monospace;letter-spacing:-0.8px;-webkit-text-stroke:0.35px currentColor"><span style="color:#a9b7c6">        </span><span style="color:#467cda">root =</span><span style="color:#a9b7c6"> </span><span style="color:#9876aa;font-style:italic">document</span><span style="color:#a9b7c6">.getElementById(</span></div>
<div style="left:755.5px;top:509.9px;width:144.0px;height:36px;background:#333333;border-radius:7px"></div>
<div style="left:766.5px;top:514.8px;font:400 25px/25px 'Liberation Sans',sans-serif;color:#7e7e7e;-webkit-text-stroke:0.3px #7e7e7e;transform:scaleX(1.0513);transform-origin:0 0;">elementId:</div>
<div style="left:904.0px;top:516.9px;font:400 28px/28px 'Liberation Mono',monospace;letter-spacing:-0.8px;-webkit-text-stroke:0.35px currentColor"><span style="color:#6a8759">"root"</span><span style="color:#a9b7c6">) </span><span style="color:#cc7832">as</span><span style="color:#a9b7c6"> HTMLElement</span></div>
<div style="left:129.0px;top:560.9px;font:400 28px/28px 'Liberation Mono',monospace;letter-spacing:-0.8px;-webkit-text-stroke:0.35px currentColor"><span style="color:#a9b7c6">    ) { </span></div>
<div style="left:259.5px;top:560.0px;width:406.0px;height:26px;background:#333333;border-radius:6px"></div>
<div style="left:270.5px;top:558.8px;font:400 25px/25px 'Liberation Sans',sans-serif;color:#7e7e7e;-webkit-text-stroke:0.3px #7e7e7e;transform:scaleX(1.0377);transform-origin:0 0;">this: DOMScope&lt;HTMLElement&gt;</div>
<div style="left:129.0px;top:604.9px;font:400 28px/28px 'Liberation Mono',monospace;letter-spacing:-0.8px;-webkit-text-stroke:0.35px currentColor"><span style="color:#a9b7c6">        </span><span style="color:#a9b7c6;font-style:italic">Div</span><span style="color:#a9b7c6">(</span></div>
<div style="left:129.0px;top:648.9px;font:400 28px/28px 'Liberation Mono',monospace;letter-spacing:-0.8px;-webkit-text-stroke:0.35px currentColor"><span style="color:#a9b7c6">            </span><span style="color:#467cda">style =</span><span style="color:#a9b7c6"> { </span></div>
<div style="left:483.5px;top:648.0px;width:218.4px;height:26px;background:#333333;border-radius:6px"></div>
<div style="left:494.5px;top:646.8px;font:400 25px/25px 'Liberation Sans',sans-serif;color:#7e7e7e;-webkit-text-stroke:0.3px #7e7e7e;transform:scaleX(1.0613);transform-origin:0 0;">this: StyleBuilder</div>
<div style="left:129.0px;top:692.9px;font:400 28px/28px 'Liberation Mono',monospace;letter-spacing:-0.8px;-webkit-text-stroke:0.35px currentColor"><span style="color:#a9b7c6">                </span><span style="color:#ffc66d;font-style:italic">padding</span><span style="color:#a9b7c6">(</span><span style="color:#6897bb">25</span><span style="color:#a9b7c6">.</span><span style="color:#9876aa;font-style:italic">px</span><span style="color:#a9b7c6">)</span></div>
<div style="left:129.0px;top:736.9px;font:400 28px/28px 'Liberation Mono',monospace;letter-spacing:-0.8px;-webkit-text-stroke:0.35px currentColor"><span style="color:#a9b7c6">            }</span></div>
<div style="left:129.0px;top:780.9px;font:400 28px/28px 'Liberation Mono',monospace;letter-spacing:-0.8px;-webkit-text-stroke:0.35px currentColor"><span style="color:#a9b7c6">        ) { </span></div>
<div style="left:323.5px;top:780.0px;width:479.0px;height:26px;background:#333333;border-radius:6px"></div>
<div style="left:334.5px;top:778.8px;font:400 25px/25px 'Liberation Sans',sans-serif;color:#7e7e7e;-webkit-text-stroke:0.3px #7e7e7e;transform:scaleX(1.0409);transform-origin:0 0;">this: ElementScope&lt;HTMLDivElement&gt;</div>
<div style="left:129.0px;top:824.9px;font:400 28px/28px 'Liberation Mono',monospace;letter-spacing:-0.8px;-webkit-text-stroke:0.35px currentColor"><span style="color:#a9b7c6">            </span><span style="color:#a9b7c6;font-style:italic">Button</span><span style="color:#a9b7c6">(</span><span style="color:#467cda">attrs =</span><span style="color:#a9b7c6"> { </span></div>
<div style="left:595.5px;top:824.0px;width:380.4px;height:26px;background:#333333;border-radius:6px"></div>
<div style="left:606.5px;top:822.8px;font:400 25px/25px 'Liberation Sans',sans-serif;color:#7e7e7e;-webkit-text-stroke:0.3px #7e7e7e;transform:scaleX(1.0924);transform-origin:0 0;">this: AttrsBuilder&lt;Tag.Button&gt;</div>
<div style="left:129.0px;top:868.9px;font:400 28px/28px 'Liberation Mono',monospace;letter-spacing:-0.8px;-webkit-text-stroke:0.35px currentColor"><span style="color:#a9b7c6">                onClick { count.</span><span style="color:#9876aa;text-decoration:underline;text-underline-offset:4px;text-decoration-thickness:2px">value</span><span style="color:#a9b7c6"> = count.</span><span style="color:#9876aa;text-decoration:underline;text-underline-offset:4px;text-decoration-thickness:2px">value</span><span style="color:#a9b7c6"> - </span><span style="color:#6897bb">1</span><span style="color:#a9b7c6"> }</span></div>
<div style="left:129.0px;top:912.9px;font:400 28px/28px 'Liberation Mono',monospace;letter-spacing:-0.8px;-webkit-text-stroke:0.35px currentColor"><span style="color:#a9b7c6">            }) { </span></div>
<div style="left:403.5px;top:912.0px;width:539.5px;height:26px;background:#333333;border-radius:6px"></div>
<div style="left:414.5px;top:910.8px;font:400 25px/25px 'Liberation Sans',sans-serif;color:#7e7e7e;-webkit-text-stroke:0.3px #7e7e7e;transform:scaleX(1.0412);transform-origin:0 0;">this: ElementScope&lt;HTMLHeadingElement&gt;</div>
<div style="left:129.0px;top:956.9px;font:400 28px/28px 'Liberation Mono',monospace;letter-spacing:-0.8px;-webkit-text-stroke:0.35px currentColor"><span style="color:#a9b7c6">                </span><span style="color:#a9b7c6;font-style:italic">Text</span><span style="color:#a9b7c6">(</span></div>
<div style="left:467.5px;top:949.9px;width:89.5px;height:36px;background:#333333;border-radius:7px"></div>
<div style="left:478.5px;top:954.8px;font:400 25px/25px 'Liberation Sans',sans-serif;color:#7e7e7e;-webkit-text-stroke:0.3px #7e7e7e;transform:scaleX(1.0224);transform-origin:0 0;">value:</div>
<div style="left:561.5px;top:956.9px;font:400 28px/28px 'Liberation Mono',monospace;letter-spacing:-0.8px;-webkit-text-stroke:0.35px currentColor"><span style="color:#6a8759">"-"</span><span style="color:#a9b7c6">)</span></div>
<div style="left:129.0px;top:1000.9px;font:400 28px/28px 'Liberation Mono',monospace;letter-spacing:-0.8px;-webkit-text-stroke:0.35px currentColor"><span style="color:#a9b7c6">            }</span></div>
<div style="left:129.0px;top:1088.9px;font:400 28px/28px 'Liberation Mono',monospace;letter-spacing:-0.8px;-webkit-text-stroke:0.35px currentColor"><span style="color:#a9b7c6">            </span><span style="color:#a9b7c6;font-style:italic">Span</span><span style="color:#a9b7c6">(</span></div>
<div style="left:129.0px;top:1132.9px;font:400 28px/28px 'Liberation Mono',monospace;letter-spacing:-0.8px;-webkit-text-stroke:0.35px currentColor"><span style="color:#a9b7c6">                </span><span style="color:#467cda">style =</span><span style="color:#a9b7c6"> { </span></div>
<div style="left:547.5px;top:1132.0px;width:218.4px;height:26px;background:#333333;border-radius:6px"></div>
<div style="left:558.5px;top:1130.8px;font:400 25px/25px 'Liberation Sans',sans-serif;color:#7e7e7e;-webkit-text-stroke:0.3px #7e7e7e;transform:scaleX(1.0613);transform-origin:0 0;">this: StyleBuilder</div>
<div style="left:129.0px;top:1176.9px;font:400 28px/28px 'Liberation Mono',monospace;letter-spacing:-0.8px;-webkit-text-stroke:0.35px currentColor"><span style="color:#a9b7c6">                    </span><span style="color:#ffc66d;font-style:italic">padding</span><span style="color:#a9b7c6">(</span><span style="color:#6897bb">15</span><span style="color:#a9b7c6">.</span><span style="color:#9876aa;font-style:italic">px</span><span style="color:#a9b7c6">)</span></div>
<div style="left:129.0px;top:1220.9px;font:400 28px/28px 'Liberation Mono',monospace;letter-spacing:-0.8px;-webkit-text-stroke:0.35px currentColor"><span style="color:#a9b7c6">                }</span></div>
<div style="left:129.0px;top:1264.9px;font:400 28px/28px 'Liberation Mono',monospace;letter-spacing:-0.8px;-webkit-text-stroke:0.35px currentColor"><span style="color:#a9b7c6">            ) { </span></div>
<div style="left:387.5px;top:1264.0px;width:500.6px;height:26px;background:#333333;border-radius:6px"></div>
<div style="left:398.5px;top:1262.8px;font:400 25px/25px 'Liberation Sans',sans-serif;color:#7e7e7e;-webkit-text-stroke:0.3px #7e7e7e;transform:scaleX(1.0359);transform-origin:0 0;">this: ElementScope&lt;HTMLSpanElement&gt;</div>
<div style="left:129.0px;top:1308.9px;font:400 28px/28px 'Liberation Mono',monospace;letter-spacing:-0.8px;-webkit-text-stroke:0.35px currentColor"><span style="color:#a9b7c6">                </span><span style="color:#a9b7c6;font-style:italic">Text</span><span style="color:#a9b7c6">(</span></div>
<div style="left:467.5px;top:1301.9px;width:89.5px;height:36px;background:#333333;border-radius:7px"></div>
<div style="left:478.5px;top:1306.8px;font:400 25px/25px 'Liberation Sans',sans-serif;color:#7e7e7e;-webkit-text-stroke:0.3px #7e7e7e;transform:scaleX(1.0224);transform-origin:0 0;">value:</div>
<div style="left:561.5px;top:1308.9px;font:400 28px/28px 'Liberation Mono',monospace;letter-spacing:-0.8px;-webkit-text-stroke:0.35px currentColor"><span style="color:#6a8759">"</span><span style="color:#cc7832">${</span><span style="color:#a9b7c6">count.</span><span style="color:#9876aa;text-decoration:underline;text-underline-offset:4px;text-decoration-thickness:2px">value</span><span style="color:#cc7832">}</span><span style="color:#6a8759">"</span><span style="color:#a9b7c6">)</span></div>
<div style="left:129.0px;top:1352.9px;font:400 28px/28px 'Liberation Mono',monospace;letter-spacing:-0.8px;-webkit-text-stroke:0.35px currentColor"><span style="color:#a9b7c6">            }</span></div>
<div style="left:129.0px;top:1484.9px;font:400 28px/28px 'Liberation Mono',monospace;letter-spacing:-0.8px;-webkit-text-stroke:0.35px currentColor"><span style="color:#a9b7c6">            </span><span style="color:#a9b7c6;font-style:italic">Button</span><span style="color:#a9b7c6">(</span><span style="color:#467cda">attrs =</span><span style="color:#a9b7c6"> { </span></div>
<div style="left:595.5px;top:1484.0px;width:380.4px;height:26px;background:#333333;border-radius:6px"></div>
<div style="left:606.5px;top:1482.8px;font:400 25px/25px 'Liberation Sans',sans-serif;color:#7e7e7e;-webkit-text-stroke:0.3px #7e7e7e;transform:scaleX(1.0924);transform-origin:0 0;">this: AttrsBuilder&lt;Tag.Button&gt;</div>
<div style="left:129.0px;top:1528.9px;font:400 28px/28px 'Liberation Mono',monospace;letter-spacing:-0.8px;-webkit-text-stroke:0.35px currentColor"><span style="color:#a9b7c6">                onClick { count.</span><span style="color:#9876aa;text-decoration:underline;text-underline-offset:4px;text-decoration-thickness:2px">value</span><span style="color:#a9b7c6"> = count.</span><span style="color:#9876aa;text-decoration:underline;text-underline-offset:4px;text-decoration-thickness:2px">value</span><span style="color:#a9b7c6"> + </span><span style="color:#6897bb">1</span><span style="color:#a9b7c6"> }</span></div>
<div style="left:129.0px;top:1572.9px;font:400 28px/28px 'Liberation Mono',monospace;letter-spacing:-0.8px;-webkit-text-stroke:0.35px currentColor"><span style="color:#a9b7c6">            }) { </span></div>
<div style="left:403.5px;top:1572.0px;width:539.5px;height:26px;background:#333333;border-radius:6px"></div>
<div style="left:414.5px;top:1570.8px;font:400 25px/25px 'Liberation Sans',sans-serif;color:#7e7e7e;-webkit-text-stroke:0.3px #7e7e7e;transform:scaleX(1.0412);transform-origin:0 0;">this: ElementScope&lt;HTMLHeadingElement&gt;</div>
<div style="left:129.0px;top:1616.9px;font:400 28px/28px 'Liberation Mono',monospace;letter-spacing:-0.8px;-webkit-text-stroke:0.35px currentColor"><span style="color:#a9b7c6">                </span><span style="color:#a9b7c6;font-style:italic">Text</span><span style="color:#a9b7c6">(</span></div>
<div style="left:467.5px;top:1609.9px;width:89.5px;height:36px;background:#333333;border-radius:7px"></div>
<div style="left:478.5px;top:1614.8px;font:400 25px/25px 'Liberation Sans',sans-serif;color:#7e7e7e;-webkit-text-stroke:0.3px #7e7e7e;transform:scaleX(1.0224);transform-origin:0 0;">value:</div>
<div style="left:561.5px;top:1616.9px;font:400 28px/28px 'Liberation Mono',monospace;letter-spacing:-0.8px;-webkit-text-stroke:0.35px currentColor"><span style="color:#6a8759">"+"</span><span style="color:#a9b7c6">)</span></div>
<div style="left:129.0px;top:1660.9px;font:400 28px/28px 'Liberation Mono',monospace;letter-spacing:-0.8px;-webkit-text-stroke:0.35px currentColor"><span style="color:#a9b7c6">            }</span></div>
<div style="left:129.0px;top:1704.9px;font:400 28px/28px 'Liberation Mono',monospace;letter-spacing:-0.8px;-webkit-text-stroke:0.35px currentColor"><span style="color:#a9b7c6">        }</span></div>
<div style="left:129.0px;top:1748.9px;font:400 28px/28px 'Liberation Mono',monospace;letter-spacing:-0.8px;-webkit-text-stroke:0.35px currentColor"><span style="color:#a9b7c6">    }</span></div>
<div style="left:129.0px;top:1792.9px;font:400 28px/28px 'Liberation Mono',monospace;letter-spacing:-0.8px;-webkit-text-stroke:0.35px currentColor"><span style="color:#a9b7c6">}</span></div>
</div>
<div style="left:938px;top:110px;width:115px;height:1838px;overflow:hidden">
<div style="left:-161.2px;width:200px;text-align:right;transform:scaleX(0.88);transform-origin:100% 0;top:-10.3px;font:400 27px/27px 'Liberation Mono',monospace;-webkit-text-stroke:0.3px currentColor;color:#606366">4</div>
<div style="left:-161.2px;width:200px;text-align:right;transform:scaleX(0.88);transform-origin:100% 0;top:33.7px;font:400 27px/27px 'Liberation Mono',monospace;-webkit-text-stroke:0.3px currentColor;color:#606366">5</div>
<div style="left:-161.2px;width:200px;text-align:right;transform:scaleX(0.88);transform-origin:100% 0;top:77.7px;font:400 27px/27px 'Liberation Mono',monospace;-webkit-text-stroke:0.3px currentColor;color:#606366">6</div>
<div style="left:-161.2px;width:200px;text-align:right;transform:scaleX(0.88);transform-origin:100% 0;top:121.7px;font:400 27px/27px 'Liberation Mono',monospace;-webkit-text-stroke:0.3px currentColor;color:#606366">7</div>
<div style="left:-161.2px;width:200px;text-align:right;transform:scaleX(0.88);transform-origin:100% 0;top:165.7px;font:400 27px/27px 'Liberation Mono',monospace;-webkit-text-stroke:0.3px currentColor;color:#606366">8</div>
<div style="left:-161.2px;width:200px;text-align:right;transform:scaleX(0.88);transform-origin:100% 0;top:209.7px;font:400 27px/27px 'Liberation Mono',monospace;-webkit-text-stroke:0.3px currentColor;color:#606366">9</div>
<div style="left:-161.2px;width:200px;text-align:right;transform:scaleX(0.88);transform-origin:100% 0;top:253.7px;font:400 27px/27px 'Liberation Mono',monospace;-webkit-text-stroke:0.3px currentColor;color:#606366">10</div>
<div style="left:-161.2px;width:200px;text-align:right;transform:scaleX(0.88);transform-origin:100% 0;top:297.7px;font:400 27px/27px 'Liberation Mono',monospace;-webkit-text-stroke:0.3px currentColor;color:#606366">11</div>
<div style="left:-161.2px;width:200px;text-align:right;transform:scaleX(0.88);transform-origin:100% 0;top:341.7px;font:400 27px/27px 'Liberation Mono',monospace;-webkit-text-stroke:0.3px currentColor;color:#606366">12</div>
<div style="left:-161.2px;width:200px;text-align:right;transform:scaleX(0.88);transform-origin:100% 0;top:385.7px;font:400 27px/27px 'Liberation Mono',monospace;-webkit-text-stroke:0.3px currentColor;color:#606366">13</div>
<div style="left:-161.2px;width:200px;text-align:right;transform:scaleX(0.88);transform-origin:100% 0;top:429.7px;font:400 27px/27px 'Liberation Mono',monospace;-webkit-text-stroke:0.3px currentColor;color:#606366">14</div>
<div style="left:-161.2px;width:200px;text-align:right;transform:scaleX(0.88);transform-origin:100% 0;top:473.7px;font:400 27px/27px 'Liberation Mono',monospace;-webkit-text-stroke:0.3px currentColor;color:#606366">15</div>
<div style="left:-161.2px;width:200px;text-align:right;transform:scaleX(0.88);transform-origin:100% 0;top:517.7px;font:400 27px/27px 'Liberation Mono',monospace;-webkit-text-stroke:0.3px currentColor;color:#606366">16</div>
<div style="left:-161.2px;width:200px;text-align:right;transform:scaleX(0.88);transform-origin:100% 0;top:561.7px;font:400 27px/27px 'Liberation Mono',monospace;-webkit-text-stroke:0.3px currentColor;color:#606366">17</div>
<div style="left:-161.2px;width:200px;text-align:right;transform:scaleX(0.88);transform-origin:100% 0;top:605.7px;font:400 27px/27px 'Liberation Mono',monospace;-webkit-text-stroke:0.3px currentColor;color:#606366">18</div>
<div style="left:-161.2px;width:200px;text-align:right;transform:scaleX(0.88);transform-origin:100% 0;top:649.7px;font:400 27px/27px 'Liberation Mono',monospace;-webkit-text-stroke:0.3px currentColor;color:#606366">19</div>
<div style="left:-161.2px;width:200px;text-align:right;transform:scaleX(0.88);transform-origin:100% 0;top:693.7px;font:400 27px/27px 'Liberation Mono',monospace;-webkit-text-stroke:0.3px currentColor;color:#606366">20</div>
<div style="left:-161.2px;width:200px;text-align:right;transform:scaleX(0.88);transform-origin:100% 0;top:737.7px;font:400 27px/27px 'Liberation Mono',monospace;-webkit-text-stroke:0.3px currentColor;color:#606366">21</div>
<div style="left:-161.2px;width:200px;text-align:right;transform:scaleX(0.88);transform-origin:100% 0;top:781.7px;font:400 27px/27px 'Liberation Mono',monospace;-webkit-text-stroke:0.3px currentColor;color:#606366">22</div>
<div style="left:-161.2px;width:200px;text-align:right;transform:scaleX(0.88);transform-origin:100% 0;top:825.7px;font:400 27px/27px 'Liberation Mono',monospace;-webkit-text-stroke:0.3px currentColor;color:#606366">23</div>
<div style="left:-161.2px;width:200px;text-align:right;transform:scaleX(0.88);transform-origin:100% 0;top:869.7px;font:400 27px/27px 'Liberation Mono',monospace;-webkit-text-stroke:0.3px currentColor;color:#a4a3a3">24</div>
<div style="left:-161.2px;width:200px;text-align:right;transform:scaleX(0.88);transform-origin:100% 0;top:913.7px;font:400 27px/27px 'Liberation Mono',monospace;-webkit-text-stroke:0.3px currentColor;color:#606366">25</div>
<div style="left:-161.2px;width:200px;text-align:right;transform:scaleX(0.88);transform-origin:100% 0;top:957.7px;font:400 27px/27px 'Liberation Mono',monospace;-webkit-text-stroke:0.3px currentColor;color:#606366">26</div>
<div style="left:-161.2px;width:200px;text-align:right;transform:scaleX(0.88);transform-origin:100% 0;top:1001.7px;font:400 27px/27px 'Liberation Mono',monospace;-webkit-text-stroke:0.3px currentColor;color:#606366">27</div>
<div style="left:-161.2px;width:200px;text-align:right;transform:scaleX(0.88);transform-origin:100% 0;top:1045.7px;font:400 27px/27px 'Liberation Mono',monospace;-webkit-text-stroke:0.3px currentColor;color:#606366">28</div>
<div style="left:-161.2px;width:200px;text-align:right;transform:scaleX(0.88);transform-origin:100% 0;top:1089.7px;font:400 27px/27px 'Liberation Mono',monospace;-webkit-text-stroke:0.3px currentColor;color:#606366">29</div>
<div style="left:-161.2px;width:200px;text-align:right;transform:scaleX(0.88);transform-origin:100% 0;top:1133.7px;font:400 27px/27px 'Liberation Mono',monospace;-webkit-text-stroke:0.3px currentColor;color:#606366">30</div>
<div style="left:-161.2px;width:200px;text-align:right;transform:scaleX(0.88);transform-origin:100% 0;top:1177.7px;font:400 27px/27px 'Liberation Mono',monospace;-webkit-text-stroke:0.3px currentColor;color:#606366">31</div>
<div style="left:-161.2px;width:200px;text-align:right;transform:scaleX(0.88);transform-origin:100% 0;top:1221.7px;font:400 27px/27px 'Liberation Mono',monospace;-webkit-text-stroke:0.3px currentColor;color:#606366">32</div>
<div style="left:-161.2px;width:200px;text-align:right;transform:scaleX(0.88);transform-origin:100% 0;top:1265.7px;font:400 27px/27px 'Liberation Mono',monospace;-webkit-text-stroke:0.3px currentColor;color:#606366">33</div>
<div style="left:-161.2px;width:200px;text-align:right;transform:scaleX(0.88);transform-origin:100% 0;top:1309.7px;font:400 27px/27px 'Liberation Mono',monospace;-webkit-text-stroke:0.3px currentColor;color:#606366">34</div>
<div style="left:-161.2px;width:200px;text-align:right;transform:scaleX(0.88);transform-origin:100% 0;top:1353.7px;font:400 27px/27px 'Liberation Mono',monospace;-webkit-text-stroke:0.3px currentColor;color:#606366">35</div>
<div style="left:-161.2px;width:200px;text-align:right;transform:scaleX(0.88);transform-origin:100% 0;top:1397.7px;font:400 27px/27px 'Liberation Mono',monospace;-webkit-text-stroke:0.3px currentColor;color:#606366">36</div>
<div style="left:-161.2px;width:200px;text-align:right;transform:scaleX(0.88);transform-origin:100% 0;top:1441.7px;font:400 27px/27px 'Liberation Mono',monospace;-webkit-text-stroke:0.3px currentColor;color:#606366">37</div>
<div style="left:-161.2px;width:200px;text-align:right;transform:scaleX(0.88);transform-origin:100% 0;top:1485.7px;font:400 27px/27px 'Liberation Mono',monospace;-webkit-text-stroke:0.3px currentColor;color:#606366">38</div>
<div style="left:-161.2px;width:200px;text-align:right;transform:scaleX(0.88);transform-origin:100% 0;top:1529.7px;font:400 27px/27px 'Liberation Mono',monospace;-webkit-text-stroke:0.3px currentColor;color:#606366">39</div>
<div style="left:-161.2px;width:200px;text-align:right;transform:scaleX(0.88);transform-origin:100% 0;top:1573.7px;font:400 27px/27px 'Liberation Mono',monospace;-webkit-text-stroke:0.3px currentColor;color:#606366">40</div>
<div style="left:-161.2px;width:200px;text-align:right;transform:scaleX(0.88);transform-origin:100% 0;top:1617.7px;font:400 27px/27px 'Liberation Mono',monospace;-webkit-text-stroke:0.3px currentColor;color:#606366">41</div>
<div style="left:-161.2px;width:200px;text-align:right;transform:scaleX(0.88);transform-origin:100% 0;top:1661.7px;font:400 27px/27px 'Liberation Mono',monospace;-webkit-text-stroke:0.3px currentColor;color:#606366">42</div>
<div style="left:-161.2px;width:200px;text-align:right;transform:scaleX(0.88);transform-origin:100% 0;top:1705.7px;font:400 27px/27px 'Liberation Mono',monospace;-webkit-text-stroke:0.3px currentColor;color:#606366">43</div>
<div style="left:-161.2px;width:200px;text-align:right;transform:scaleX(0.88);transform-origin:100% 0;top:1749.7px;font:400 27px/27px 'Liberation Mono',monospace;-webkit-text-stroke:0.3px currentColor;color:#606366">44</div>
<div style="left:-161.2px;width:200px;text-align:right;transform:scaleX(0.88);transform-origin:100% 0;top:1793.7px;font:400 27px/27px 'Liberation Mono',monospace;-webkit-text-stroke:0.3px currentColor;color:#606366">45</div>
</div>
<svg style="position:absolute;left:1044px;top:360.4px" width="20" height="26" viewBox="0 0 20 26"><polygon points="10,1 18,9 18,24 2,24 2,9" fill="#2b2b2b" stroke="#5f5f5f" stroke-width="2"/><rect x="5" y="14.5" width="10" height="2" fill="#5f5f5f"/></svg>
<svg style="position:absolute;left:1044px;top:844.4px" width="20" height="26" viewBox="0 0 20 26"><polygon points="10,1 18,9 18,24 2,24 2,9" fill="#2b2b2b" stroke="#5f5f5f" stroke-width="2"/><rect x="5" y="14.5" width="10" height="2" fill="#5f5f5f"/></svg>
<svg style="position:absolute;left:1044px;top:1020.4px" width="20" height="26" viewBox="0 0 20 26"><polygon points="10,1 18,9 18,24 2,24 2,9" fill="#2b2b2b" stroke="#5f5f5f" stroke-width="2"/><rect x="5" y="14.5" width="10" height="2" fill="#5f5f5f"/></svg>
<svg style="position:absolute;left:1044px;top:1108.4px" width="20" height="26" viewBox="0 0 20 26"><polygon points="10,1 18,9 18,24 2,24 2,9" fill="#2b2b2b" stroke="#5f5f5f" stroke-width="2"/><rect x="5" y="14.5" width="10" height="2" fill="#5f5f5f"/></svg>
<svg style="position:absolute;left:1044px;top:1328.4px" width="20" height="26" viewBox="0 0 20 26"><polygon points="10,1 18,9 18,24 2,24 2,9" fill="#2b2b2b" stroke="#5f5f5f" stroke-width="2"/><rect x="5" y="14.5" width="10" height="2" fill="#5f5f5f"/></svg>
<svg style="position:absolute;left:1044px;top:1460.4px" width="20" height="26" viewBox="0 0 20 26"><polygon points="10,1 18,9 18,24 2,24 2,9" fill="#2b2b2b" stroke="#5f5f5f" stroke-width="2"/><rect x="5" y="14.5" width="10" height="2" fill="#5f5f5f"/></svg>
<svg style="position:absolute;left:1044px;top:1680.4px" width="20" height="26" viewBox="0 0 20 26"><polygon points="10,1 18,9 18,24 2,24 2,9" fill="#2b2b2b" stroke="#5f5f5f" stroke-width="2"/><rect x="5" y="14.5" width="10" height="2" fill="#5f5f5f"/></svg>
<svg style="position:absolute;left:1044px;top:1768.4px" width="20" height="26" viewBox="0 0 20 26"><polygon points="10,1 18,9 18,24 2,24 2,9" fill="#2b2b2b" stroke="#5f5f5f" stroke-width="2"/><rect x="5" y="14.5" width="10" height="2" fill="#5f5f5f"/></svg>
<svg style="position:absolute;left:1044px;top:1812.4px" width="20" height="26" viewBox="0 0 20 26"><polygon points="10,1 18,9 18,24 2,24 2,9" fill="#2b2b2b" stroke="#5f5f5f" stroke-width="2"/><rect x="5" y="14.5" width="10" height="2" fill="#5f5f5f"/></svg>
<svg style="position:absolute;left:1044px;top:1856.4px" width="20" height="26" viewBox="0 0 20 26"><polygon points="10,1 18,9 18,24 2,24 2,9" fill="#2b2b2b" stroke="#5f5f5f" stroke-width="2"/><rect x="5" y="14.5" width="10" height="2" fill="#5f5f5f"/></svg>
<svg style="position:absolute;left:1044px;top:1900.4px" width="20" height="26" viewBox="0 0 20 26"><polygon points="10,1 18,9 18,24 2,24 2,9" fill="#2b2b2b" stroke="#5f5f5f" stroke-width="2"/><rect x="5" y="14.5" width="10" height="2" fill="#5f5f5f"/></svg>
<svg style="position:absolute;left:1044px;top:454.9px" width="20" height="26" viewBox="0 0 20 26"><polygon points="2,1 18,1 18,16 10,24 2,16" fill="#2b2b2b" stroke="#5f5f5f" stroke-width="2"/><rect x="5" y="8.5" width="10" height="2" fill="#5f5f5f"/></svg>
<svg style="position:absolute;left:1044px;top:674.9px" width="20" height="26" viewBox="0 0 20 26"><polygon points="2,1 18,1 18,16 10,24 2,16" fill="#2b2b2b" stroke="#5f5f5f" stroke-width="2"/><rect x="5" y="8.5" width="10" height="2" fill="#5f5f5f"/></svg>
<svg style="position:absolute;left:1044px;top:762.9px" width="20" height="26" viewBox="0 0 20 26"><polygon points="2,1 18,1 18,16 10,24 2,16" fill="#2b2b2b" stroke="#5f5f5f" stroke-width="2"/><rect x="5" y="8.5" width="10" height="2" fill="#5f5f5f"/></svg>
<svg style="position:absolute;left:1044px;top:894.9px" width="20" height="26" viewBox="0 0 20 26"><polygon points="2,1 18,1 18,16 10,24 2,16" fill="#2b2b2b" stroke="#5f5f5f" stroke-width="2"/><rect x="5" y="8.5" width="10" height="2" fill="#5f5f5f"/></svg>
<svg style="position:absolute;left:1044px;top:938.9px" width="20" height="26" viewBox="0 0 20 26"><polygon points="2,1 18,1 18,16 10,24 2,16" fill="#2b2b2b" stroke="#5f5f5f" stroke-width="2"/><rect x="5" y="8.5" width="10" height="2" fill="#5f5f5f"/></svg>
<svg style="position:absolute;left:1044px;top:1246.9px" width="20" height="26" viewBox="0 0 20 26"><polygon points="2,1 18,1 18,16 10,24 2,16" fill="#2b2b2b" stroke="#5f5f5f" stroke-width="2"/><rect x="5" y="8.5" width="10" height="2" fill="#5f5f5f"/></svg>
<svg style="position:absolute;left:1044px;top:1378.9px" width="20" height="26" viewBox="0 0 20 26"><polygon points="2,1 18,1 18,16 10,24 2,16" fill="#2b2b2b" stroke="#5f5f5f" stroke-width="2"/><rect x="5" y="8.5" width="10" height="2" fill="#5f5f5f"/></svg>
<svg style="position:absolute;left:1044px;top:1598.9px" width="20" height="26" viewBox="0 0 20 26"><polygon points="2,1 18,1 18,16 10,24 2,16" fill="#2b2b2b" stroke="#5f5f5f" stroke-width="2"/><rect x="5" y="8.5" width="10" height="2" fill="#5f5f5f"/></svg>
<div style="left:2374.5px;top:70.3px;font:400 28px/28px 'Liberation Sans',sans-serif;color:#bbbbbb;-webkit-text-stroke:0.3px #bbbbbb;transform:scaleX(0.9762);transform-origin:0 0;">Gradle</div>
<svg style="position:absolute;left:3451px;top:71px" width="27" height="27" viewBox="0 0 27 27"><circle cx="13.5" cy="13.5" r="9.99" fill="#afb1b3"/><rect x="9.59" y="0" width="7.83" height="27" fill="#afb1b3" transform="rotate(0 13.5 13.5)"/><rect x="9.59" y="0" width="7.83" height="27" fill="#afb1b3" transform="rotate(60 13.5 13.5)"/><rect x="9.59" y="0" width="7.83" height="27" fill="#afb1b3" transform="rotate(120 13.5 13.5)"/><circle cx="13.5" cy="13.5" r="4.86" fill="#3b4755"/></svg>
<div style="left:3504px;top:82px;width:24px;height:3px;background:#afb1b3;"></div>
<svg style="position:absolute;left:2379px;top:127px" width="25" height="25" viewBox="0 0 25 25"><path d="M2 10.5 A10.5 10.5 0 0 1 22.5 10" fill="none" stroke="#afb1b3" stroke-width="3"/><path d="M23 14 A10.5 10.5 0 0 1 2.5 14.5" fill="none" stroke="#afb1b3" stroke-width="3"/><path d="M0.5 1.5 V10.6 H9.6 Z" fill="#afb1b3"/><path d="M24 23 V14 H15 Z" fill="#afb1b3"/></svg>
<svg style="position:absolute;left:2434px;top:130px" width="20" height="20" viewBox="0 0 20 20"><rect x="8.3" y="0" width="3.4" height="20" fill="#afb1b3"/><rect x="0" y="8.3" width="20" height="3.4" fill="#afb1b3"/></svg>
<div style="left:2486px;top:138.5px;width:20px;height:3.5px;background:#58595b;"></div>
<div style="left:2528px;top:120px;width:2px;height:40px;background:#515658;"></div>
<svg style="position:absolute;left:2546.5px;top:129px" width="30" height="22" viewBox="0 0 31 22"><path d="M0.5 21.7 C0 13 4.5 4 13 3.6 C18 3.4 22.5 5 24.5 8.5 C25.5 10.5 25.5 13 25 16 L24 21.7 H20 C20 19 19.5 17.5 16.5 17.5 C13.5 17.5 13 19 13 21.7 H11 C11 19 10 17.5 8 17.5 C6 17.5 5 19 5 21.7 Z" fill="#afb1b3"/><path d="M23.5 8 C25.5 10.5 29 9.5 29.8 5.5 C30.3 2.5 28.5 0.6 26 0.9 C24.2 1.1 23 2.4 23.3 4" fill="none" stroke="#afb1b3" stroke-width="2.3"/><path d="M5 6.5 C7 11 9 12.5 14 9" fill="none" stroke="#3c3f41" stroke-width="1.1"/><circle cx="20" cy="8.8" r="0.9" fill="#3c3f41"/></svg>
<div style="left:2594px;top:120px;width:2px;height:40px;background:#515658;"></div>
<svg style="position:absolute;left:2616px;top:126px" width="24" height="28" viewBox="0 0 24 28"><rect x="0" y="0" width="24" height="4" fill="#afb1b3"/><rect x="0" y="24" width="24" height="4" fill="#afb1b3"/><path d="M12 6 L19 11.7 H5 Z" fill="#afb1b3"/><path d="M5 15.8 H19 L12 22.2 Z" fill="#afb1b3"/></svg>
<svg style="position:absolute;left:2668px;top:127px" width="24" height="26" viewBox="0 0 24 26"><path d="M5 1 H19 L12 8 Z" fill="#afb1b3"/><rect x="0" y="10.8" width="24" height="4.2" fill="#afb1b3"/><path d="M12 18 L19 25 H5 Z" fill="#afb1b3"/></svg>
<svg style="position:absolute;left:2718px;top:128px" width="31" height="29" viewBox="0 0 31 29"><path d="M0 0 H9.5 L13 4 H28 V12.5 H15 V22 H0 Z" fill="#8c979f"/><rect x="16" y="14" width="6" height="6" fill="#40b6e0"/><rect x="24" y="14" width="6" height="6" fill="#40b6e0"/><rect x="16" y="22" width="6" height="6" fill="#40b6e0"/><rect x="24" y="22" width="6" height="6" fill="#40b6e0"/></svg>
<div style="left:2764px;top:120px;width:2px;height:40px;background:#515658;"></div>
<svg style="position:absolute;left:2784px;top:125px" width="29" height="30" viewBox="0 0 29 30"><rect x="0" y="11" width="28" height="8" fill="#afb1b3"/><path d="M7 29 L14 1 M14 29 L21 1" stroke="#3c3f41" stroke-width="4.5"/><path d="M7 29 L14 1 M14 29 L21 1" stroke="#afb1b3" stroke-width="2"/></svg>
<div style="left:2830px;top:120px;width:2px;height:40px;background:#515658;"></div>
<svg style="position:absolute;left:2850px;top:125px" width="34" height="32" viewBox="0 0 34 32"><path d="M2 24 L14 12 A8 8 0 0 1 24 2 L19 8 L22 11 L28 6 A8 8 0 0 1 18 16 L6 28 Z" fill="#afb1b3"/><path d="M22 26 H34 L28 32 Z" fill="#afb1b3"/></svg>
<div style="left:2362px;top:770px;width:1180px;height:40px;background:#2f65ca;"></div>
<svg style="position:absolute;left:2375.5px;top:182.5px" width="20" height="13" viewBox="0 0 20 13"><polyline points="1.5,1.5 9.5,9.5 17.5,1.5" fill="none" stroke="#a7a9ab" stroke-width="2.4"/></svg>
<svg style="position:absolute;left:2410px;top:179px" width="30" height="22" viewBox="0 0 31 22"><path d="M0.5 21.7 C0 13 4.5 4 13 3.6 C18 3.4 22.5 5 24.5 8.5 C25.5 10.5 25.5 13 25 16 L24 21.7 H20 C20 19 19.5 17.5 16.5 17.5 C13.5 17.5 13 19 13 21.7 H11 C11 19 10 17.5 8 17.5 C6 17.5 5 19 5 21.7 Z" fill="#8c979f"/><path d="M23.5 8 C25.5 10.5 29 9.5 29.8 5.5 C30.3 2.5 28.5 0.6 26 0.9 C24.2 1.1 23 2.4 23.3 4" fill="none" stroke="#8c979f" stroke-width="2.3"/><path d="M5 6.5 C7 11 9 12.5 14 9" fill="none" stroke="#3c3f41" stroke-width="1.1"/><circle cx="20" cy="8.8" r="0.9" fill="#3c3f41"/></svg>
<div style="left:2448.7px;top:177.3px;font:400 28px/28px 'Liberation Sans',sans-serif;color:#bbbbbb;-webkit-text-stroke:0.3px #bbbbbb;transform:scaleX(1.0097);transform-origin:0 0;">compose-web-app1</div>
<svg style="position:absolute;left:2411.5px;top:222.5px" width="20" height="13" viewBox="0 0 20 13"><polyline points="1.5,1.5 9.5,9.5 17.5,1.5" fill="none" stroke="#a7a9ab" stroke-width="2.4"/></svg>
<svg style="position:absolute;left:2447.5px;top:218px" width="28" height="22" viewBox="0 0 28 22"><path d="M0 0 H9.5 L12 3.5 H28 V22 H0 Z" fill="#8c979f"/></svg>
<div style="left:2459.0px;top:227.5px;width:21px;height:21px;border-radius:50%;background:#3c3f41"></div>
<svg style="position:absolute;left:2461.3px;top:229.8px" width="16.4" height="16.4" viewBox="0 0 16.4 16.4"><circle cx="8.2" cy="8.2" r="6.07" fill="#40b6e0"/><rect x="6.15" y="0" width="4.10" height="16.4" fill="#40b6e0" transform="rotate(0 8.2 8.2)"/><rect x="6.15" y="0" width="4.10" height="16.4" fill="#40b6e0" transform="rotate(60 8.2 8.2)"/><rect x="6.15" y="0" width="4.10" height="16.4" fill="#40b6e0" transform="rotate(120 8.2 8.2)"/><circle cx="8.2" cy="8.2" r="2.87" fill="#3c3f41"/></svg>
<div style="left:2484.7px;top:217.3px;font:400 28px/28px 'Liberation Sans',sans-serif;color:#bbbbbb;-webkit-text-stroke:0.3px #bbbbbb;transform:scaleX(1.0097);transform-origin:0 0;">Tasks</div>
<svg style="position:absolute;left:2451px;top:259.5px" width="13" height="20" viewBox="0 0 13 20"><polyline points="1.5,1.5 10,9.5 1.5,17.5" fill="none" stroke="#a7a9ab" stroke-width="2.4"/></svg>
<svg style="position:absolute;left:2483.5px;top:258px" width="28" height="22" viewBox="0 0 28 22"><path d="M0 0 H9.5 L12 3.5 H28 V22 H0 Z" fill="#8c979f"/></svg>
<div style="left:2495.0px;top:267.5px;width:21px;height:21px;border-radius:50%;background:#3c3f41"></div>
<svg style="position:absolute;left:2497.3px;top:269.8px" width="16.4" height="16.4" viewBox="0 0 16.4 16.4"><circle cx="8.2" cy="8.2" r="6.07" fill="#40b6e0"/><rect x="6.15" y="0" width="4.10" height="16.4" fill="#40b6e0" transform="rotate(0 8.2 8.2)"/><rect x="6.15" y="0" width="4.10" height="16.4" fill="#40b6e0" transform="rotate(60 8.2 8.2)"/><rect x="6.15" y="0" width="4.10" height="16.4" fill="#40b6e0" transform="rotate(120 8.2 8.2)"/><circle cx="8.2" cy="8.2" r="2.87" fill="#3c3f41"/></svg>
<div style="left:2520.7px;top:257.3px;font:400 28px/28px 'Liberation Sans',sans-serif;color:#bbbbbb;-webkit-text-stroke:0.3px #bbbbbb;transform:scaleX(1.0097);transform-origin:0 0;">build</div>
<svg style="position:absolute;left:2451px;top:299.5px" width="13" height="20" viewBox="0 0 13 20"><polyline points="1.5,1.5 10,9.5 1.5,17.5" fill="none" stroke="#a7a9ab" stroke-width="2.4"/></svg>
<svg style="position:absolute;left:2483.5px;top:298px" width="28" height="22" viewBox="0 0 28 22"><path d="M0 0 H9.5 L12 3.5 H28 V22 H0 Z" fill="#8c979f"/></svg>
<div style="left:2495.0px;top:307.5px;width:21px;height:21px;border-radius:50%;background:#3c3f41"></div>
<svg style="position:absolute;left:2497.3px;top:309.8px" width="16.4" height="16.4" viewBox="0 0 16.4 16.4"><circle cx="8.2" cy="8.2" r="6.07" fill="#40b6e0"/><rect x="6.15" y="0" width="4.10" height="16.4" fill="#40b6e0" transform="rotate(0 8.2 8.2)"/><rect x="6.15" y="0" width="4.10" height="16.4" fill="#40b6e0" transform="rotate(60 8.2 8.2)"/><rect x="6.15" y="0" width="4.10" height="16.4" fill="#40b6e0" transform="rotate(120 8.2 8.2)"/><circle cx="8.2" cy="8.2" r="2.87" fill="#3c3f41"/></svg>
<div style="left:2520.7px;top:297.3px;font:400 28px/28px 'Liberation Sans',sans-serif;color:#bbbbbb;-webkit-text-stroke:0.3px #bbbbbb;transform:scaleX(1.0097);transform-origin:0 0;">build setup</div>
<svg style="position:absolute;left:2451px;top:339.5px" width="13" height="20" viewBox="0 0 13 20"><polyline points="1.5,1.5 10,9.5 1.5,17.5" fill="none" stroke="#a7a9ab" stroke-width="2.4"/></svg>
<svg style="position:absolute;left:2483.5px;top:338px" width="28" height="22" viewBox="0 0 28 22"><path d="M0 0 H9.5 L12 3.5 H28 V22 H0 Z" fill="#8c979f"/></svg>
<div style="left:2495.0px;top:347.5px;width:21px;height:21px;border-radius:50%;background:#3c3f41"></div>
<svg style="position:absolute;left:2497.3px;top:349.8px" width="16.4" height="16.4" viewBox="0 0 16.4 16.4"><circle cx="8.2" cy="8.2" r="6.07" fill="#40b6e0"/><rect x="6.15" y="0" width="4.10" height="16.4" fill="#40b6e0" transform="rotate(0 8.2 8.2)"/><rect x="6.15" y="0" width="4.10" height="16.4" fill="#40b6e0" transform="rotate(60 8.2 8.2)"/><rect x="6.15" y="0" width="4.10" height="16.4" fill="#40b6e0" transform="rotate(120 8.2 8.2)"/><circle cx="8.2" cy="8.2" r="2.87" fill="#3c3f41"/></svg>
<div style="left:2520.7px;top:337.3px;font:400 28px/28px 'Liberation Sans',sans-serif;color:#bbbbbb;-webkit-text-stroke:0.3px #bbbbbb;transform:scaleX(1.0097);transform-origin:0 0;">dukat</div>
<svg style="position:absolute;left:2451px;top:379.5px" width="13" height="20" viewBox="0 0 13 20"><polyline points="1.5,1.5 10,9.5 1.5,17.5" fill="none" stroke="#a7a9ab" stroke-width="2.4"/></svg>
<svg style="position:absolute;left:2483.5px;top:378px" width="28" height="22" viewBox="0 0 28 22"><path d="M0 0 H9.5 L12 3.5 H28 V22 H0 Z" fill="#8c979f"/></svg>
<div style="left:2495.0px;top:387.5px;width:21px;height:21px;border-radius:50%;background:#3c3f41"></div>
<svg style="position:absolute;left:2497.3px;top:389.8px" width="16.4" height="16.4" viewBox="0 0 16.4 16.4"><circle cx="8.2" cy="8.2" r="6.07" fill="#40b6e0"/><rect x="6.15" y="0" width="4.10" height="16.4" fill="#40b6e0" transform="rotate(0 8.2 8.2)"/><rect x="6.15" y="0" width="4.10" height="16.4" fill="#40b6e0" transform="rotate(60 8.2 8.2)"/><rect x="6.15" y="0" width="4.10" height="16.4" fill="#40b6e0" transform="rotate(120 8.2 8.2)"/><circle cx="8.2" cy="8.2" r="2.87" fill="#3c3f41"/></svg>
<div style="left:2520.7px;top:377.3px;font:400 28px/28px 'Liberation Sans',sans-serif;color:#bbbbbb;-webkit-text-stroke:0.3px #bbbbbb;transform:scaleX(1.0097);transform-origin:0 0;">help</div>
<svg style="position:absolute;left:2447.5px;top:422.5px" width="20" height="13" viewBox="0 0 20 13"><polyline points="1.5,1.5 9.5,9.5 17.5,1.5" fill="none" stroke="#a7a9ab" stroke-width="2.4"/></svg>
<svg style="position:absolute;left:2483.5px;top:418px" width="28" height="22" viewBox="0 0 28 22"><path d="M0 0 H9.5 L12 3.5 H28 V22 H0 Z" fill="#8c979f"/></svg>
<div style="left:2495.0px;top:427.5px;width:21px;height:21px;border-radius:50%;background:#3c3f41"></div>
<svg style="position:absolute;left:2497.3px;top:429.8px" width="16.4" height="16.4" viewBox="0 0 16.4 16.4"><circle cx="8.2" cy="8.2" r="6.07" fill="#40b6e0"/><rect x="6.15" y="0" width="4.10" height="16.4" fill="#40b6e0" transform="rotate(0 8.2 8.2)"/><rect x="6.15" y="0" width="4.10" height="16.4" fill="#40b6e0" transform="rotate(60 8.2 8.2)"/><rect x="6.15" y="0" width="4.10" height="16.4" fill="#40b6e0" transform="rotate(120 8.2 8.2)"/><circle cx="8.2" cy="8.2" r="2.87" fill="#3c3f41"/></svg>
<div style="left:2520.7px;top:417.3px;font:400 28px/28px 'Liberation Sans',sans-serif;color:#bbbbbb;-webkit-text-stroke:0.3px #bbbbbb;transform:scaleX(1.0097);transform-origin:0 0;">kotlin browser</div>
<svg style="position:absolute;left:2521.1px;top:457.2px" width="25.6" height="25.6" viewBox="0 0 25.6 25.6"><circle cx="12.8" cy="12.8" r="9.47" fill="#8c979f"/><rect x="9.86" y="0" width="5.89" height="25.6" fill="#8c979f" transform="rotate(0 12.8 12.8)"/><rect x="9.86" y="0" width="5.89" height="25.6" fill="#8c979f" transform="rotate(60 12.8 12.8)"/><rect x="9.86" y="0" width="5.89" height="25.6" fill="#8c979f" transform="rotate(120 12.8 12.8)"/><circle cx="12.8" cy="12.8" r="4.48" fill="#3c3f41"/></svg>
<div style="left:2556.8px;top:457.3px;font:400 28px/28px 'Liberation Sans',sans-serif;color:#bbbbbb;-webkit-text-stroke:0.3px #bbbbbb;transform:scaleX(1.0097);transform-origin:0 0;">jsBrowserDevelopmentExecutableDistributeResources</div>
<svg style="position:absolute;left:2521.1px;top:497.2px" width="25.6" height="25.6" viewBox="0 0 25.6 25.6"><circle cx="12.8" cy="12.8" r="9.47" fill="#8c979f"/><rect x="9.86" y="0" width="5.89" height="25.6" fill="#8c979f" transform="rotate(0 12.8 12.8)"/><rect x="9.86" y="0" width="5.89" height="25.6" fill="#8c979f" transform="rotate(60 12.8 12.8)"/><rect x="9.86" y="0" width="5.89" height="25.6" fill="#8c979f" transform="rotate(120 12.8 12.8)"/><circle cx="12.8" cy="12.8" r="4.48" fill="#3c3f41"/></svg>
<div style="left:2556.8px;top:497.3px;font:400 28px/28px 'Liberation Sans',sans-serif;color:#bbbbbb;-webkit-text-stroke:0.3px #bbbbbb;transform:scaleX(1.0097);transform-origin:0 0;">jsBrowserDevelopmentExecutableDistribution</div>
<svg style="position:absolute;left:2521.1px;top:537.2px" width="25.6" height="25.6" viewBox="0 0 25.6 25.6"><circle cx="12.8" cy="12.8" r="9.47" fill="#8c979f"/><rect x="9.86" y="0" width="5.89" height="25.6" fill="#8c979f" transform="rotate(0 12.8 12.8)"/><rect x="9.86" y="0" width="5.89" height="25.6" fill="#8c979f" transform="rotate(60 12.8 12.8)"/><rect x="9.86" y="0" width="5.89" height="25.6" fill="#8c979f" transform="rotate(120 12.8 12.8)"/><circle cx="12.8" cy="12.8" r="4.48" fill="#3c3f41"/></svg>
<div style="left:2556.8px;top:537.3px;font:400 28px/28px 'Liberation Sans',sans-serif;color:#bbbbbb;-webkit-text-stroke:0.3px #bbbbbb;transform:scaleX(1.0097);transform-origin:0 0;">jsBrowserDevelopmentRun</div>
<svg style="position:absolute;left:2521.1px;top:577.2px" width="25.6" height="25.6" viewBox="0 0 25.6 25.6"><circle cx="12.8" cy="12.8" r="9.47" fill="#8c979f"/><rect x="9.86" y="0" width="5.89" height="25.6" fill="#8c979f" transform="rotate(0 12.8 12.8)"/><rect x="9.86" y="0" width="5.89" height="25.6" fill="#8c979f" transform="rotate(60 12.8 12.8)"/><rect x="9.86" y="0" width="5.89" height="25.6" fill="#8c979f" transform="rotate(120 12.8 12.8)"/><circle cx="12.8" cy="12.8" r="4.48" fill="#3c3f41"/></svg>
<div style="left:2556.8px;top:577.3px;font:400 28px/28px 'Liberation Sans',sans-serif;color:#bbbbbb;-webkit-text-stroke:0.3px #bbbbbb;transform:scaleX(1.0097);transform-origin:0 0;">jsBrowserDevelopmentWebpack</div>
<svg style="position:absolute;left:2521.1px;top:617.2px" width="25.6" height="25.6" viewBox="0 0 25.6 25.6"><circle cx="12.8" cy="12.8" r="9.47" fill="#8c979f"/><rect x="9.86" y="0" width="5.89" height="25.6" fill="#8c979f" transform="rotate(0 12.8 12.8)"/><rect x="9.86" y="0" width="5.89" height="25.6" fill="#8c979f" transform="rotate(60 12.8 12.8)"/><rect x="9.86" y="0" width="5.89" height="25.6" fill="#8c979f" transform="rotate(120 12.8 12.8)"/><circle cx="12.8" cy="12.8" r="4.48" fill="#3c3f41"/></svg>
<div style="left:2556.8px;top:617.3px;font:400 28px/28px 'Liberation Sans',sans-serif;color:#bbbbbb;-webkit-text-stroke:0.3px #bbbbbb;transform:scaleX(1.0097);transform-origin:0 0;">jsBrowserDistribution</div>
<svg style="position:absolute;left:2521.1px;top:657.2px" width="25.6" height="25.6" viewBox="0 0 25.6 25.6"><circle cx="12.8" cy="12.8" r="9.47" fill="#8c979f"/><rect x="9.86" y="0" width="5.89" height="25.6" fill="#8c979f" transform="rotate(0 12.8 12.8)"/><rect x="9.86" y="0" width="5.89" height="25.6" fill="#8c979f" transform="rotate(60 12.8 12.8)"/><rect x="9.86" y="0" width="5.89" height="25.6" fill="#8c979f" transform="rotate(120 12.8 12.8)"/><circle cx="12.8" cy="12.8" r="4.48" fill="#3c3f41"/></svg>
<div style="left:2556.8px;top:657.3px;font:400 28px/28px 'Liberation Sans',sans-serif;color:#bbbbbb;-webkit-text-stroke:0.3px #bbbbbb;transform:scaleX(1.0097);transform-origin:0 0;">jsBrowserProductionExecutableDistributeResources</div>
<svg style="position:absolute;left:2521.1px;top:697.2px" width="25.6" height="25.6" viewBox="0 0 25.6 25.6"><circle cx="12.8" cy="12.8" r="9.47" fill="#8c979f"/><rect x="9.86" y="0" width="5.89" height="25.6" fill="#8c979f" transform="rotate(0 12.8 12.8)"/><rect x="9.86" y="0" width="5.89" height="25.6" fill="#8c979f" transform="rotate(60 12.8 12.8)"/><rect x="9.86" y="0" width="5.89" height="25.6" fill="#8c979f" transform="rotate(120 12.8 12.8)"/><circle cx="12.8" cy="12.8" r="4.48" fill="#3c3f41"/></svg>
<div style="left:2556.8px;top:697.3px;font:400 28px/28px 'Liberation Sans',sans-serif;color:#bbbbbb;-webkit-text-stroke:0.3px #bbbbbb;transform:scaleX(1.0097);transform-origin:0 0;">jsBrowserProductionRun</div>
<svg style="position:absolute;left:2521.1px;top:737.2px" width="25.6" height="25.6" viewBox="0 0 25.6 25.6"><circle cx="12.8" cy="12.8" r="9.47" fill="#8c979f"/><rect x="9.86" y="0" width="5.89" height="25.6" fill="#8c979f" transform="rotate(0 12.8 12.8)"/><rect x="9.86" y="0" width="5.89" height="25.6" fill="#8c979f" transform="rotate(60 12.8 12.8)"/><rect x="9.86" y="0" width="5.89" height="25.6" fill="#8c979f" transform="rotate(120 12.8 12.8)"/><circle cx="12.8" cy="12.8" r="4.48" fill="#3c3f41"/></svg>
<div style="left:2556.8px;top:737.3px;font:400 28px/28px 'Liberation Sans',sans-serif;color:#bbbbbb;-webkit-text-stroke:0.3px #bbbbbb;transform:scaleX(1.0097);transform-origin:0 0;">jsBrowserProductionWebpack</div>
<svg style="position:absolute;left:2521.1px;top:777.2px" width="25.6" height="25.6" viewBox="0 0 25.6 25.6"><circle cx="12.8" cy="12.8" r="9.47" fill="#9aabc4"/><rect x="9.86" y="0" width="5.89" height="25.6" fill="#9aabc4" transform="rotate(0 12.8 12.8)"/><rect x="9.86" y="0" width="5.89" height="25.6" fill="#9aabc4" transform="rotate(60 12.8 12.8)"/><rect x="9.86" y="0" width="5.89" height="25.6" fill="#9aabc4" transform="rotate(120 12.8 12.8)"/><circle cx="12.8" cy="12.8" r="4.48" fill="#2f65ca"/></svg>
<div style="left:2556.8px;top:777.3px;font:400 28px/28px 'Liberation Sans',sans-serif;color:#ffffff;-webkit-text-stroke:0.3px #ffffff;transform:scaleX(1.0097);transform-origin:0 0;">jsBrowserRun</div>
<svg style="position:absolute;left:2521.1px;top:817.2px" width="25.6" height="25.6" viewBox="0 0 25.6 25.6"><circle cx="12.8" cy="12.8" r="9.47" fill="#8c979f"/><rect x="9.86" y="0" width="5.89" height="25.6" fill="#8c979f" transform="rotate(0 12.8 12.8)"/><rect x="9.86" y="0" width="5.89" height="25.6" fill="#8c979f" transform="rotate(60 12.8 12.8)"/><rect x="9.86" y="0" width="5.89" height="25.6" fill="#8c979f" transform="rotate(120 12.8 12.8)"/><circle cx="12.8" cy="12.8" r="4.48" fill="#3c3f41"/></svg>
<div style="left:2556.8px;top:817.3px;font:400 28px/28px 'Liberation Sans',sans-serif;color:#bbbbbb;-webkit-text-stroke:0.3px #bbbbbb;transform:scaleX(1.0097);transform-origin:0 0;">jsBrowserWebpack</div>
<svg style="position:absolute;left:2451px;top:859.5px" width="13" height="20" viewBox="0 0 13 20"><polyline points="1.5,1.5 10,9.5 1.5,17.5" fill="none" stroke="#a7a9ab" stroke-width="2.4"/></svg>
<svg style="position:absolute;left:2483.5px;top:858px" width="28" height="22" viewBox="0 0 28 22"><path d="M0 0 H9.5 L12 3.5 H28 V22 H0 Z" fill="#8c979f"/></svg>
<div style="left:2495.0px;top:867.5px;width:21px;height:21px;border-radius:50%;background:#3c3f41"></div>
<svg style="position:absolute;left:2497.3px;top:869.8px" width="16.4" height="16.4" viewBox="0 0 16.4 16.4"><circle cx="8.2" cy="8.2" r="6.07" fill="#40b6e0"/><rect x="6.15" y="0" width="4.10" height="16.4" fill="#40b6e0" transform="rotate(0 8.2 8.2)"/><rect x="6.15" y="0" width="4.10" height="16.4" fill="#40b6e0" transform="rotate(60 8.2 8.2)"/><rect x="6.15" y="0" width="4.10" height="16.4" fill="#40b6e0" transform="rotate(120 8.2 8.2)"/><circle cx="8.2" cy="8.2" r="2.87" fill="#3c3f41"/></svg>
<div style="left:2520.7px;top:857.3px;font:400 28px/28px 'Liberation Sans',sans-serif;color:#bbbbbb;-webkit-text-stroke:0.3px #bbbbbb;transform:scaleX(1.0097);transform-origin:0 0;">nodejs</div>
<svg style="position:absolute;left:2451px;top:899.5px" width="13" height="20" viewBox="0 0 13 20"><polyline points="1.5,1.5 10,9.5 1.5,17.5" fill="none" stroke="#a7a9ab" stroke-width="2.4"/></svg>
<svg style="position:absolute;left:2483.5px;top:898px" width="28" height="22" viewBox="0 0 28 22"><path d="M0 0 H9.5 L12 3.5 H28 V22 H0 Z" fill="#8c979f"/></svg>
<div style="left:2495.0px;top:907.5px;width:21px;height:21px;border-radius:50%;background:#3c3f41"></div>
<svg style="position:absolute;left:2497.3px;top:909.8px" width="16.4" height="16.4" viewBox="0 0 16.4 16.4"><circle cx="8.2" cy="8.2" r="6.07" fill="#40b6e0"/><rect x="6.15" y="0" width="4.10" height="16.4" fill="#40b6e0" transform="rotate(0 8.2 8.2)"/><rect x="6.15" y="0" width="4.10" height="16.4" fill="#40b6e0" transform="rotate(60 8.2 8.2)"/><rect x="6.15" y="0" width="4.10" height="16.4" fill="#40b6e0" transform="rotate(120 8.2 8.2)"/><circle cx="8.2" cy="8.2" r="2.87" fill="#3c3f41"/></svg>
<div style="left:2520.7px;top:897.3px;font:400 28px/28px 'Liberation Sans',sans-serif;color:#bbbbbb;-webkit-text-stroke:0.3px #bbbbbb;transform:scaleX(1.0097);transform-origin:0 0;">other</div>
<svg style="position:absolute;left:2451px;top:939.5px" width="13" height="20" viewBox="0 0 13 20"><polyline points="1.5,1.5 10,9.5 1.5,17.5" fill="none" stroke="#a7a9ab" stroke-width="2.4"/></svg>
<svg style="position:absolute;left:2483.5px;top:938px" width="28" height="22" viewBox="0 0 28 22"><path d="M0 0 H9.5 L12 3.5 H28 V22 H0 Z" fill="#8c979f"/></svg>
<div style="left:2495.0px;top:947.5px;width:21px;height:21px;border-radius:50%;background:#3c3f41"></div>
<svg style="position:absolute;left:2497.3px;top:949.8px" width="16.4" height="16.4" viewBox="0 0 16.4 16.4"><circle cx="8.2" cy="8.2" r="6.07" fill="#40b6e0"/><rect x="6.15" y="0" width="4.10" height="16.4" fill="#40b6e0" transform="rotate(0 8.2 8.2)"/><rect x="6.15" y="0" width="4.10" height="16.4" fill="#40b6e0" transform="rotate(60 8.2 8.2)"/><rect x="6.15" y="0" width="4.10" height="16.4" fill="#40b6e0" transform="rotate(120 8.2 8.2)"/><circle cx="8.2" cy="8.2" r="2.87" fill="#3c3f41"/></svg>
<div style="left:2520.7px;top:937.3px;font:400 28px/28px 'Liberation Sans',sans-serif;color:#bbbbbb;-webkit-text-stroke:0.3px #bbbbbb;transform:scaleX(1.0097);transform-origin:0 0;">verification</div>
<svg style="position:absolute;left:3088px;top:778px" width="256" height="26" viewBox="0 0 256 26"><rect x="20" y="11.5" width="236" height="4" fill="#e8392c"/><path d="M0 13.5 L25 1 L25 26 Z" fill="#e8392c"/></svg>
<svg style="position:absolute;left:2343px;top:15px" width="30" height="25" viewBox="0 0 30 25"><path d="M14 14.5 C12.5 12 12.5 10 12.5 6.5 C12.5 2.5 15 0.5 18 0.5 C21 0.5 23 2.5 23 6.5 C23 9.5 22.5 12 21 14 V15.5 C25 16.5 29 18 29 22 V23.5 H22 Z" fill="#afb1b3"/><path d="M0.8 24 C0.8 19 5 17 9.5 16 V14.5 C7.5 12.5 7 10 7 7 C7 3 9.5 0.8 12.8 0.8 C16 0.8 18.5 3 18.5 7 C18.5 10 18 12.5 16 14.5 V16 C20.5 17 24.8 19 24.8 24 Z" fill="#afb1b3" stroke="#3c3f41" stroke-width="1.5"/></svg>
<svg style="position:absolute;left:2378px;top:26px" width="16" height="9" viewBox="0 0 16 9"><path d="M0 0 H16 L8 9 Z" fill="#afb1b3"/></svg>
<div style="left:2410px;top:8px;width:2px;height:39px;background:#4f5356;"></div>
<svg style="position:absolute;left:2427px;top:13px" width="32" height="30" viewBox="0 0 32 30"><path d="M0.5 11.5 L9.5 3 C11 1.5 13 1 15 1 H20 V2.5 C17.5 3 15.5 4.5 13.5 6.5 L10.5 9.5 L5 15 Z" fill="#499c54"/><path d="M8.5 8.5 L29.5 27.5" stroke="#499c54" stroke-width="5"/></svg>
<div style="left:2482px;top:6px;width:632px;height:39px;border:2px solid #5e6163;border-radius:6px"></div>
<svg style="position:absolute;left:2501px;top:18px" width="30" height="22" viewBox="0 0 31 22"><path d="M0.5 21.7 C0 13 4.5 4 13 3.6 C18 3.4 22.5 5 24.5 8.5 C25.5 10.5 25.5 13 25 16 L24 21.7 H20 C20 19 19.5 17.5 16.5 17.5 C13.5 17.5 13 19 13 21.7 H11 C11 19 10 17.5 8 17.5 C6 17.5 5 19 5 21.7 Z" fill="#6e7376"/><path d="M23.5 8 C25.5 10.5 29 9.5 29.8 5.5 C30.3 2.5 28.5 0.6 26 0.9 C24.2 1.1 23 2.4 23.3 4" fill="none" stroke="#6e7376" stroke-width="2.3"/><path d="M5 6.5 C7 11 9 12.5 14 9" fill="none" stroke="#3c3f41" stroke-width="1.1"/><circle cx="20" cy="8.8" r="0.9" fill="#3c3f41"/></svg>
<div style="left:2540.6px;top:15.7px;font:400 24px/24px 'Liberation Sans',sans-serif;color:#bbbbbb;-webkit-text-stroke:0.3px #bbbbbb;">compose-web-app1 [jsBrowserDevelopmentRun]</div>
<svg style="position:absolute;left:3081px;top:24px" width="18" height="10" viewBox="0 0 18 10"><path d="M0 0 H18 L9 10 Z" fill="#afb1b3"/></svg>
<svg style="position:absolute;left:3146px;top:16px" width="20" height="24" viewBox="0 0 20 24"><path d="M0 0 L20 12 L0 24 Z" fill="#499c54"/></svg>
<svg style="position:absolute;left:3193px;top:13px" width="26" height="30" viewBox="0 0 26 30"><path d="M6.5 1.5 L10.5 6 M19.5 1.5 L15.5 6" stroke="#499c54" stroke-width="3"/><path d="M5 11 C5 6.5 21 6.5 21 11 V24 C21 28.5 17 30 13 30 C9 30 5 28.5 5 24 Z" fill="#499c54"/><rect x="1" y="9.5" width="24" height="2.6" fill="#499c54"/><rect x="1" y="15.8" width="24" height="2.6" fill="#499c54"/><rect x="1" y="23" width="24" height="2.6" fill="#499c54"/><rect x="9" y="13.6" width="8" height="2.2" fill="#3c3f41"/><rect x="9" y="19" width="8" height="3" fill="#3c3f41"/></svg>
<svg style="position:absolute;left:3243px;top:14px" width="32" height="31" viewBox="0 0 32 31"><path d="M1 2.5 L10.5 0 L20.5 2.5 V8 H16 V6 L11.5 5.5 V21 L16 20 V24 C14 26 12 27.5 10.5 28 C5 26 1 22 1 14 Z" fill="#bbbcbe"/><path d="M17 11 L31 19.5 L17 28.5 Z" fill="#499c54"/></svg>
<svg style="position:absolute;left:3291px;top:13px" width="33" height="32" viewBox="0 0 33 32"><path d="M13 24.5 A11.5 11.5 0 1 1 24 9.5" fill="none" stroke="#bbbcbe" stroke-width="2.6"/><path d="M13.5 6 V13.5 L9.5 19" fill="none" stroke="#bbbcbe" stroke-width="2.2"/><path d="M16 9.5 L31.5 18.5 L16 27.5 Z" fill="#499c54"/></svg>
<svg style="position:absolute;left:3336px;top:26px" width="16" height="9" viewBox="0 0 16 9"><path d="M0 0 H16 L8 9 Z" fill="#afb1b3"/></svg>
<div style="left:3374px;top:18px;width:20px;height:20px;background:#575a5c;"></div>
<div style="left:3417px;top:8px;width:2px;height:40px;background:#4f5356;"></div>
<svg style="position:absolute;left:3435px;top:14px" width="30" height="30" viewBox="0 0 30 30"><circle cx="11.5" cy="11.5" r="9" fill="none" stroke="#afb1b3" stroke-width="3.2"/><path d="M18 18 L28 28" stroke="#afb1b3" stroke-width="3.8"/></svg>
<svg style="position:absolute;left:3489px;top:15px" width="27" height="27" viewBox="0 0 27 27"><circle cx="13.5" cy="13.5" r="9.99" fill="#afb1b3"/><rect x="9.59" y="0" width="7.83" height="27" fill="#afb1b3" transform="rotate(0 13.5 13.5)"/><rect x="9.59" y="0" width="7.83" height="27" fill="#afb1b3" transform="rotate(60 13.5 13.5)"/><rect x="9.59" y="0" width="7.83" height="27" fill="#afb1b3" transform="rotate(120 13.5 13.5)"/><circle cx="13.5" cy="13.5" r="4.86" fill="#3c3f41"/></svg>
<svg style="position:absolute;left:3538px;top:12px" width="34" height="34" viewBox="0 0 34 34"><defs><clipPath id="av"><circle cx="16" cy="16.2" r="16"/></clipPath></defs><g clip-path="url(#av)"><rect x="0" y="0" width="34" height="34" fill="#3b4a2c"/><path d="M3 8 C6 2 10 0 13 0 L13 6 Z" fill="#a9bcd6"/><path d="M19 0 C24 1 28 4 30 8 L22 8 Z" fill="#b8c8de"/><rect x="0" y="20" width="34" height="10" fill="#8f9a4a"/><rect x="24" y="8" width="10" height="20" fill="#1f2418"/><ellipse cx="16" cy="15" rx="5.6" ry="8" fill="#c99d86"/><path d="M4 33 C5 28 9 27 12 26 H21 C24 27 27 28 28 33 Z" fill="#243056"/><path d="M12 26 H21 L19 33 H14 Z" fill="#b9c4d6"/></g><circle cx="27.4" cy="27.4" r="6" fill="#3c3f41"/><circle cx="27.4" cy="27.4" r="4.7" fill="#5fb832"/></svg>
<div style="left:0px;top:56px;width:3584px;height:2px;background:#2b2b2b;"></div>
</body></html>
